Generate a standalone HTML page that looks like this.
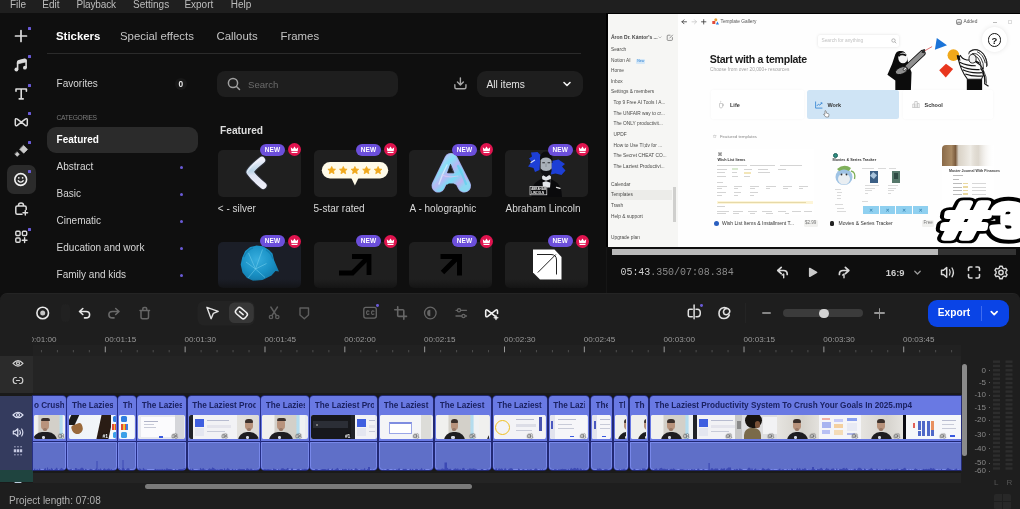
<!DOCTYPE html>
<html lang="en">
<head>
<meta charset="utf-8">
<title>Video Editor</title>
<style>
*{box-sizing:border-box;margin:0;padding:0}
html,body{width:1020px;height:509px;overflow:hidden;background:#0e0e0e}
body{position:relative;font-family:"Liberation Sans","DejaVu Sans",sans-serif;color:#ddd;font-size:11px}
#root{position:absolute;left:0;top:0;width:1020px;height:509px;will-change:transform;transform:translateZ(0)}
.abs{position:absolute}
.t{position:absolute;white-space:nowrap;line-height:1}
#menubar{left:0;top:0;width:1020px;height:13px;background:#1f1f1f}
#menubar .t{top:-.5px;font-size:10px;color:#bdbdbd}
#sidebar{left:0;top:13px;width:44px;height:280px;background:#0f0f0f}
.dot{position:absolute;width:3px;height:3px;background:#6a5bd8;border-radius:.5px}
#panel{left:44px;top:13px;width:563px;height:280px;background:#0f0f0f}
.tab{top:30.800px;font-size:11.400px;color:#c4c4c4}
.cat{font-size:10px;color:#d6d6d6;left:56.600px;transform:translateY(.45px)}
.cdot{position:absolute;left:180.200px;width:3px;height:3px;border-radius:50%;background:#6a5bd8}
.card{position:absolute;width:83px;height:47px;background:#1e1e1e;border-radius:5px}
.lbl{font-size:10px;color:#d8d8d8}
.new{position:absolute;width:25px;height:12.500px;border-radius:6.500px;background:#6c4fdb;color:#fff;font-size:6.500px;font-weight:bold;text-align:center;line-height:12.500px;letter-spacing:.1px}
.crown{position:absolute;width:13px;height:13px;border-radius:50%;background:#e0144f}
#preview{left:607px;top:13px;width:413px;height:280px;background:#0e0e0e}
#timeline{left:0;top:293px;width:1020px;height:216px;background:#1e1e1e;border-radius:7px 7px 0 0;border-top:1px solid #242424}
.rl{top:335.900px;font-size:8.100px;color:#9a9a9a}
.ml{position:absolute;right:34px;font-size:8px;color:#8a8a8a;line-height:1;white-space:nowrap}

.clip{position:absolute;top:396px;height:73.500px;background:#6979e3;border-radius:3.500px;overflow:hidden;box-shadow:0 0 0 .8px #262f8c}
.clip .ct{position:absolute;top:4.500px;font-size:8.200px;font-weight:bold;color:#1b2262;white-space:nowrap;line-height:10px;height:11px;overflow:hidden}
.clip .ths{position:absolute;left:1.200px;right:.8px;top:19px;height:24px;border-radius:2px;overflow:hidden;display:flex;background:#e8eaf0}
.th1{position:relative;height:24px;flex:none;overflow:hidden}
.clip .ln{position:absolute;left:0;right:0;top:44.500px;height:1.500px;background:#1f2674}
.clip .ab{position:absolute;left:0;right:0;top:46px;bottom:0;background:#5f6fc8;border:1px solid #7888ea;border-radius:0 0 3.500px 3.500px}
.bd{position:absolute;bottom:.5px;font-size:5px;font-weight:bold;color:#fff;line-height:6px;text-shadow:0 0 1px #000,0 0 1px #000,0 0 1.500px #000;letter-spacing:-.2px}
</style>
</head>
<body>
<div id="root">
<!-- MENUBAR -->
<div id="menubar" class="abs">
  <span class="t" style="left:10px">File</span>
  <span class="t" style="left:42.300px">Edit</span>
  <span class="t" style="left:76.500px;letter-spacing:-.15px">Playback</span>
  <span class="t" style="left:133px">Settings</span>
  <span class="t" style="left:184.400px">Export</span>
  <span class="t" style="left:230.700px">Help</span>
</div>
<!-- SIDEBAR -->
<div id="sidebar" class="abs"></div>
<div class="abs" style="left:7px;top:165px;width:28.600px;height:28.700px;border-radius:7px;background:#2b2b2b"></div>
<svg class="abs" style="left:0;top:13px" width="44" height="280" viewBox="0 13 44 280" fill="none" stroke="#dcdcdc" stroke-width="1.6" stroke-linecap="round" stroke-linejoin="round">
  <!-- plus -->
  <path d="M15.5 36h11M21 30.5v11" stroke-width="1.7"/>
  <!-- music -->
  <path d="M17.600 69.300V62.300q0-1.300 1.300-1.600l5.600-1.300q1.600-.3 1.600 1.200V67.500" stroke-width="1.600"/>
  <path d="M17.600 62.200q0-1.200 1.300-1.500l5.600-1.300q1.600-.3 1.600 1.100v1.400l-8.500 2z" fill="#dcdcdc" stroke-width=".6"/>
  <circle cx="16.400" cy="69.500" r="1.900" fill="#dcdcdc" stroke="none"/>
  <circle cx="24.900" cy="67.700" r="1.900" fill="#dcdcdc" stroke="none"/>
  <!-- T -->
  <path d="M16 91.200V89h10.400v2.200M21.200 89.200V98.700M19.200 98.900h4" stroke-width="1.600"/>
  <!-- bowtie -->
  <path d="M21.300 122.200L17.300 119.100Q15.300 117.800 15.300 120.100V124.300Q15.300 126.600 17.300 125.300L21.300 122.200L25.300 119.100Q27.300 117.800 27.300 120.100V124.300Q27.300 126.600 25.300 125.300Z" stroke-width="1.500"/>
  <!-- sparkle -->
  <path d="M23.700 145.600l3.800 3.800-3.800 3.800-3.800-3.800z" fill="#cbcbcb" stroke="#cbcbcb" stroke-width=".8"/>
  <path d="M17.200 152l2.200 2.200-2.200 2.200-2.200-2.200z" fill="#cbcbcb" stroke="#cbcbcb" stroke-width=".6"/>
  <!-- smiley -->
  <circle cx="20.700" cy="179.500" r="5.900" stroke="#f2f2f2" stroke-width="1.600"/>
  <path d="M18.200 180.800q2.500 2.800 5 0" stroke="#f2f2f2" stroke-width="1.300"/>
  <circle cx="18.800" cy="177.800" r=".85" fill="#f2f2f2" stroke="none"/>
  <circle cx="22.600" cy="177.800" r=".85" fill="#f2f2f2" stroke="none"/>
  <!-- bag plus -->
  <path d="M22 214.300H17.300q-1.500 0-1.500-1.500V207.500q0-1.500 1.500-1.500h7.400q1.500 0 1.500 1.500v2M18.500 206v-.8q0-2.200 2.500-2.200t2.500 2.200v.8" stroke-width="1.500"/>
  <path d="M25.300 210.500v4.600M23 212.800h4.600" stroke-width="1.400"/>
  <!-- grid plus -->
  <rect x="15.800" y="231.200" width="4.300" height="4.300" rx="1" stroke-width="1.400"/>
  <rect x="22.400" y="231.200" width="4.300" height="4.300" rx="1" stroke-width="1.400"/>
  <rect x="15.800" y="238" width="4.300" height="4.300" rx="1" stroke-width="1.400"/>
  <path d="M24.600 237.800v4.800M22.200 240.200h4.800" stroke-width="1.400"/>
</svg>
<div class="dot" style="left:28px;top:27px"></div>
<div class="dot" style="left:28px;top:55px"></div>
<div class="dot" style="left:28px;top:84px"></div>
<div class="dot" style="left:28px;top:112px"></div>
<div class="dot" style="left:28px;top:141px"></div>
<div class="dot" style="left:28px;top:170px"></div>
<div class="dot" style="left:28px;top:228px"></div>
<!-- PANEL -->
<div id="panel" class="abs"></div>
<div class="t tab" style="left:56px;font-weight:bold;color:#fff">Stickers</div>
<div class="t tab" style="left:120px">Special effects</div>
<div class="t tab" style="left:216.500px">Callouts</div>
<div class="t tab" style="left:280.500px">Frames</div>
<div class="abs" style="left:47px;top:53px;width:534px;height:1px;background:#2b2b2b"></div>
<!-- categories -->
<div class="t cat" style="top:79.2px">Favorites</div>
<div class="abs" style="left:175px;top:78px;width:12px;height:12px;border-radius:50%;background:#181818"></div>
<div class="t" style="left:178.600px;top:79.900px;font-size:8.300px;font-weight:bold;color:#e6e6e6">0</div>
<div class="t" style="left:56.600px;top:115.200px;font-size:6.700px;color:#7a7a7a;letter-spacing:-.32px">CATEGORIES</div>
<div class="abs" style="left:46.800px;top:126.500px;width:151.700px;height:26.500px;border-radius:9px;background:#2b2b2b"></div>
<div class="t cat" style="top:135.2px;font-weight:bold;color:#fff">Featured</div>
<div class="t cat" style="top:162.2px">Abstract</div><div class="cdot" style="top:165.500px"></div>
<div class="t cat" style="top:189.2px">Basic</div><div class="cdot" style="top:192.500px"></div>
<div class="t cat" style="top:216.2px">Cinematic</div><div class="cdot" style="top:219.500px"></div>
<div class="t cat" style="top:243.2px">Education and work</div><div class="cdot" style="top:246.500px"></div>
<div class="t cat" style="top:270.2px">Family and kids</div><div class="cdot" style="top:273.500px"></div>
<!-- search -->
<div class="abs" style="left:217px;top:71px;width:181px;height:26px;border-radius:8px;background:#1e1e1e"></div>
<svg class="abs" style="left:226px;top:76px" width="16" height="16" viewBox="0 0 16 16" fill="none" stroke="#a0a0a0" stroke-width="1.500" stroke-linecap="round"><circle cx="7" cy="7" r="4.600"/><path d="M10.500 10.500l3 3"/></svg>
<div class="t" style="left:248px;top:80.300px;font-size:9.600px;color:#6c6c6c">Search</div>
<svg class="abs" style="left:452.800px;top:76.300px" width="14.800" height="14.800" viewBox="0 0 16 16" fill="none" stroke="#a8a8a8" stroke-width="1.500" stroke-linecap="round" stroke-linejoin="round"><path d="M8 2v7.500M4.800 6.500L8 9.700l3.200-3.200M2 9.500v2.700q0 1.600 1.600 1.600h8.800q1.600 0 1.600-1.600V9.500"/></svg>
<div class="abs" style="left:477px;top:71px;width:106px;height:26px;border-radius:9px;background:#1e1e1e"></div>
<div class="t" style="left:486.400px;top:79.900px;font-size:10.200px;color:#e2e2e2">All items</div>
<svg class="abs" style="left:562px;top:80px" width="10" height="8" viewBox="0 0 10 8" fill="none" stroke="#f0f0f0" stroke-width="1.600" stroke-linecap="round" stroke-linejoin="round"><path d="M2 2.500l3 3 3-3"/></svg>
<div class="t" style="left:220px;top:125.500px;font-size:10.200px;font-weight:bold;color:#dedede">Featured</div>
<!-- cards -->
<div class="card" style="left:217.5px;top:149.5px;height:47px;background:#1f1f1f"></div>
<div class="card" style="left:313.5px;top:149.5px;height:47px;background:#1f1f1f"></div>
<div class="card" style="left:409.4px;top:149.5px;height:47px;background:#1f1f1f"></div>
<div class="card" style="left:505.3px;top:149.5px;height:47px;background:#1f1f1f"></div>
<div class="card" style="left:217.5px;top:241.7px;height:46.5px;background:#1b1e27"></div>
<div class="card" style="left:313.5px;top:241.7px;height:46.5px;background:#1f1f1f"></div>
<div class="card" style="left:409.4px;top:241.7px;height:46.5px;background:#1f1f1f"></div>
<div class="card" style="left:505.3px;top:241.7px;height:46.5px;background:#1f1f1f"></div>
<svg class="abs" style="left:240px;top:152px" width="34" height="44" viewBox="240 152 34 44" fill="none" stroke-linecap="round" stroke-linejoin="round">
<defs><linearGradient id="sg" x1="0" y1="0" x2="0" y2="1"><stop offset="0" stop-color="#eef0fb"/><stop offset=".42" stop-color="#b9d3e6"/><stop offset=".6" stop-color="#dfe4f4"/><stop offset="1" stop-color="#eceef8"/></linearGradient></defs>
<path d="M261.800 160.200Q252 168 249.800 172Q254 178 263.200 185.600" stroke="#2c2e36" stroke-width="9"/>
<path d="M261.800 160.200Q252 168 249.800 172Q254 178 263.200 185.600" stroke="url(#sg)" stroke-width="6.800"/>
<path d="M258.500 160.500Q249.500 167.500 247.300 172" stroke="#f8f8ff" stroke-width=".9" opacity=".9"/>
</svg>
<svg class="abs" style="left:318px;top:158px" width="74" height="32" viewBox="318 158 74 32">
<rect x="321.800" y="162" width="66.400" height="16.500" rx="8.200" fill="#fffbe9"/><path d="M351.300 178l3.600 7.500 3.600-7.500z" fill="#fffbe9"/><path transform="translate(331.7 170.300)" d="M0-3.800L1.150-1.300L3.800-1.050L1.800.75L2.350 3.400L0 2.050L-2.350 3.400L-1.800.75L-3.800-1.050L-1.150-1.300z" fill="#f0a81c" stroke="#f0a81c" stroke-width=".8" stroke-linejoin="round"/><path transform="translate(343.3 170.300)" d="M0-3.800L1.150-1.300L3.800-1.050L1.800.75L2.350 3.400L0 2.050L-2.350 3.400L-1.800.75L-3.800-1.050L-1.150-1.300z" fill="#f0a81c" stroke="#f0a81c" stroke-width=".8" stroke-linejoin="round"/><path transform="translate(354.9 170.300)" d="M0-3.800L1.150-1.300L3.800-1.050L1.800.75L2.350 3.400L0 2.050L-2.350 3.400L-1.800.75L-3.800-1.050L-1.150-1.300z" fill="#f0a81c" stroke="#f0a81c" stroke-width=".8" stroke-linejoin="round"/><path transform="translate(366.5 170.300)" d="M0-3.800L1.150-1.300L3.800-1.050L1.800.75L2.350 3.400L0 2.050L-2.350 3.400L-1.800.75L-3.800-1.050L-1.150-1.300z" fill="#f0a81c" stroke="#f0a81c" stroke-width=".8" stroke-linejoin="round"/><path transform="translate(378.1 170.300)" d="M0-3.800L1.150-1.300L3.800-1.050L1.800.75L2.350 3.400L0 2.050L-2.350 3.400L-1.800.75L-3.800-1.050L-1.150-1.300z" fill="#f0a81c" stroke="#f0a81c" stroke-width=".8" stroke-linejoin="round"/></svg>
<svg class="abs" style="left:428px;top:150px" width="50" height="48" viewBox="428 150 50 48" fill="none" stroke-linecap="round" stroke-linejoin="round">
<defs><linearGradient id="hg" x1="0" y1="0" x2="1" y2="1"><stop offset="0" stop-color="#c8c0f6"/><stop offset=".25" stop-color="#86e0f6"/><stop offset=".45" stop-color="#b9b6f4"/><stop offset=".65" stop-color="#78dcf4"/><stop offset=".85" stop-color="#bfb2f0"/><stop offset="1" stop-color="#8cd8f2"/></linearGradient></defs>
<path d="M438.300 185.800L451 159.700L464.300 185.800" stroke="#9fa6e6" stroke-width="13.600"/>
<path d="M438.300 185.800L451 159.700L464.300 185.800M444 178.500H458" stroke="url(#hg)" stroke-width="12.200"/>
<path d="M444 179H458" stroke="url(#hg)" stroke-width="8"/>
<path d="M450.400 164.800L447.500 172.800H453.500z" fill="#1c1c1e" stroke="#1c1c1e" stroke-width=".8"/>
<path d="M446.500 188.500L449 184.500H453.500L456 188.500" stroke="#1f1f1f" stroke-width="2.200" fill="#1f1f1f"/>
<path d="M439 184q3-9 8-19" stroke="#e6f6ff" stroke-width="1.400" opacity=".65"/>
<path d="M458 166q5 9 8 18" stroke="#5fd0ee" stroke-width="2.200" opacity=".75"/>
<path d="M442 175q6 3 16 1" stroke="#e0c8f4" stroke-width="1.200" opacity=".7"/>
</svg>
<svg class="abs" style="left:525px;top:150px" width="48" height="48" viewBox="525 150 48 48">
<path d="M531 152.500l6.500-.5 3 3-1 15-4.500 2-1.500-4-5.500-1.500 3.500-4.500-2.500-3.500 3-2z" fill="#1d3fd6"/>
<path d="M551.500 161l7-1.500 6.500 4.500-3 2.500 3.500 4-4 4.500-6-1.500-4.500 1z" fill="#1d3fd6"/>
<path d="M531 162.500l3.500-2.200" stroke="#cfd8ff" stroke-width="1.300" stroke-linecap="round"/>
<path d="M531.500 197q-.5-13 7-16.500l4.500-2.500h6l4.500 2.500q8.500 3.500 8.500 16.500z" fill="#0a0a0c"/>
<path d="M542 176.500l3.800-3h1.400l3.800 3-1 11h-7z" fill="#e4e6ea"/>
<path d="M541.300 179l4.700 1.700 4.700-1.700v3.800l-4.700-1.500-4.700 1.500z" fill="#0a0a0c"/>
<path d="M540 159q0-7.500 6.200-7.500t6.200 7.500v4h-12.400z" fill="#0c0c0e"/>
<path d="M540.600 160.500q1-3 5.400-3t5.600 3.500v7q0 4-5.500 7-5.500-3-5.500-7z" fill="#aab2ba"/>
<path d="M540.600 168.500q2 2.500 5.500 2.500t5.500-2.500v1.500q0 4-5.500 7-5.500-3-5.500-7z" fill="#111114"/>
<path d="M542.300 162.800h2.600M547.600 162.800h2.600" stroke="#2a2c30" stroke-width="1.100"/>
<path d="M546 163.500v3.500" stroke="#80888f" stroke-width=".8"/>
<rect x="530" y="186.500" width="16.800" height="8.300" fill="#101012" stroke="#e8e8e8" stroke-width=".7"/>
<text x="531.200" y="190.200" font-family="'Liberation Sans',sans-serif" font-size="2.900" font-weight="bold" fill="#f0f0f0">ABRAHAM</text>
<text x="531.200" y="193.600" font-family="'Liberation Sans',sans-serif" font-size="2.900" font-weight="bold" fill="#f0f0f0">LINCOLN</text>
<path d="M556.500 187.300l3.500 1" stroke="#e0e0e0" stroke-width="1.300" stroke-linecap="round"/>
</svg>
<svg class="abs" style="left:236px;top:243px" width="46" height="42" viewBox="236 243 46 42">
<defs><radialGradient id="cg" cx=".42" cy=".4" r=".65"><stop offset="0" stop-color="#38aede"/><stop offset=".6" stop-color="#1a92c6"/><stop offset="1" stop-color="#1279aa"/></radialGradient></defs>
<path d="M256.500 245.500l6.500.8 6 3.700 3.500 3.500 1.500 6.500 3 7 2 4.500-3.500-.5-4 4.500-9 4.500-9.500.8-6-2.700-4.500-5.500-1.800-8 1.500-7 3-6.500 5-4z" fill="url(#cg)"/>
<path d="M246 262l9.500 7 11-5.500M255.500 269l-7.500 9M255.500 269l9.500 8.500M248.500 253l7 16M262.500 249.500l-7 19.500" stroke="#7fd6f2" stroke-width=".8" fill="none" opacity=".6"/>
<path d="M244 257q3-7 9-9M266 250q5 3 7 9" stroke="#0f6e9c" stroke-width="1.200" fill="none" opacity=".55"/>
</svg>
<svg class="abs" style="left:336px;top:250px" width="40" height="30" viewBox="336 250 40 30" fill="none" stroke="#000" stroke-width="4.800" stroke-linejoin="miter">
<path d="M339 273h13.500l15.500-15.500"/><path d="M352 256.500h17v18.500"/></svg>
<svg class="abs" style="left:436px;top:250px" width="32" height="30" viewBox="436 250 32 30" fill="none" stroke="#000" stroke-width="5" stroke-linejoin="miter">
<path d="M442.500 272.500l16-16"/><path d="M440.500 256.500h19v19"/></svg>
<svg class="abs" style="left:528px;top:246px" width="38" height="38" viewBox="528 246 38 38">
<path d="M533 249.500h21.500l7 7.500v22.500h-21.500l-7-7z" fill="#fff"/>
<path d="M537.800 272.500l18-18M537 254.500h14q5.500 0 5.500 5.500v14.500" fill="none" stroke="#222" stroke-width="1"/></svg>
<div class="new" style="left:260.0px;top:143.5px">NEW</div>
<div class="crown" style="left:287.8px;top:143.3px"><svg width="13" height="13" viewBox="0 0 13 13" style="display:block"><path d="M3.300 8.300L2.800 4.300l2.100 1.700L6.500 3.500l1.600 2.500 2.100-1.700-.5 4z" fill="#fff"/><rect x="3.400" y="8.900" width="6.200" height="1.100" rx=".4" fill="#fff"/></svg></div>
<div class="new" style="left:356.0px;top:143.5px">NEW</div>
<div class="crown" style="left:383.8px;top:143.3px"><svg width="13" height="13" viewBox="0 0 13 13" style="display:block"><path d="M3.300 8.300L2.800 4.300l2.100 1.700L6.500 3.500l1.600 2.500 2.100-1.700-.5 4z" fill="#fff"/><rect x="3.400" y="8.900" width="6.200" height="1.100" rx=".4" fill="#fff"/></svg></div>
<div class="new" style="left:451.9px;top:143.5px">NEW</div>
<div class="crown" style="left:479.7px;top:143.3px"><svg width="13" height="13" viewBox="0 0 13 13" style="display:block"><path d="M3.300 8.300L2.800 4.300l2.100 1.700L6.500 3.500l1.600 2.500 2.100-1.700-.5 4z" fill="#fff"/><rect x="3.400" y="8.900" width="6.200" height="1.100" rx=".4" fill="#fff"/></svg></div>
<div class="new" style="left:547.8px;top:143.5px">NEW</div>
<div class="crown" style="left:575.6px;top:143.3px"><svg width="13" height="13" viewBox="0 0 13 13" style="display:block"><path d="M3.300 8.300L2.800 4.300l2.100 1.700L6.500 3.500l1.600 2.500 2.100-1.700-.5 4z" fill="#fff"/><rect x="3.400" y="8.900" width="6.200" height="1.100" rx=".4" fill="#fff"/></svg></div>
<div class="new" style="left:260.0px;top:234.9px">NEW</div>
<div class="crown" style="left:287.8px;top:234.7px"><svg width="13" height="13" viewBox="0 0 13 13" style="display:block"><path d="M3.300 8.300L2.800 4.300l2.100 1.700L6.500 3.500l1.600 2.500 2.100-1.700-.5 4z" fill="#fff"/><rect x="3.400" y="8.900" width="6.200" height="1.100" rx=".4" fill="#fff"/></svg></div>
<div class="new" style="left:356.0px;top:234.9px">NEW</div>
<div class="crown" style="left:383.8px;top:234.7px"><svg width="13" height="13" viewBox="0 0 13 13" style="display:block"><path d="M3.300 8.300L2.800 4.300l2.100 1.700L6.500 3.500l1.600 2.500 2.100-1.700-.5 4z" fill="#fff"/><rect x="3.400" y="8.900" width="6.200" height="1.100" rx=".4" fill="#fff"/></svg></div>
<div class="new" style="left:451.9px;top:234.9px">NEW</div>
<div class="crown" style="left:479.7px;top:234.7px"><svg width="13" height="13" viewBox="0 0 13 13" style="display:block"><path d="M3.300 8.300L2.800 4.300l2.100 1.700L6.500 3.500l1.600 2.500 2.100-1.700-.5 4z" fill="#fff"/><rect x="3.400" y="8.900" width="6.200" height="1.100" rx=".4" fill="#fff"/></svg></div>
<div class="new" style="left:547.8px;top:234.9px">NEW</div>
<div class="crown" style="left:575.6px;top:234.7px"><svg width="13" height="13" viewBox="0 0 13 13" style="display:block"><path d="M3.300 8.300L2.800 4.300l2.100 1.700L6.500 3.500l1.600 2.500 2.100-1.700-.5 4z" fill="#fff"/><rect x="3.400" y="8.900" width="6.200" height="1.100" rx=".4" fill="#fff"/></svg></div>
<div class="abs" style="left:605.500px;top:13px;width:1px;height:280px;background:#161616"></div>
<div class="abs" style="left:44px;top:279px;width:560px;height:14px;background:linear-gradient(180deg,rgba(15,15,15,0) 0%,rgba(15,15,15,.5) 50%,#0f0f0f 92%)"></div>
<div class="t lbl" style="left:217.800px;top:203.7px">&lt; - silver</div>
<div class="t lbl" style="left:313.500px;top:203.7px">5-star rated</div>
<div class="t lbl" style="left:409.500px;top:203.7px">A - holographic</div>
<div class="t lbl" style="left:505.500px;top:203.7px">Abraham Lincoln</div>

<!-- PREVIEW -->
<div id="preview" class="abs"></div>
<div class="abs" style="left:606px;top:13px;width:414px;height:234px;background:#000"></div>
<div id="video" class="abs" style="left:608px;top:14px;width:412px;height:232.500px;background:#fefefe;overflow:hidden;color:#4a4a48;font-size:4.800px">
<div class="abs" style="left:0;top:0;width:70px;height:233px;background:#f6f6f4"></div>
<div class="abs" style="left:0;top:176px;width:64px;height:10px;background:#ecece9"></div>
<div class="abs" style="left:64.5px;top:172.5px;width:3px;height:35px;background:#cfcfcd"></div>
<div class="t" style="left:3px;top:21.300px;font-size:5px;font-weight:bold;color:#444">Áron Dr. Kántor's ...</div>
<svg class="abs" style="left:49px;top:20px" width="18" height="8" viewBox="0 0 18 8" fill="none" stroke="#666" stroke-width=".7"><path d="M1.500 2.500l1.500 1.500 1.500-1.500" stroke="#aaa"/><path d="M13.500 1.200h-2.500q-.8 0-.8.800v3.600q0 .8.800.8h3.600q.8 0 .8-.8v-2.400M12.500 4.300l3.300-3.500"/></svg>
<div class="t" style="left:3px;top:33.800px">Search</div>
<div class="t" style="left:3px;top:44.5px">Notion AI</div>
<div class="t" style="left:3px;top:55.0px">Home</div>
<div class="t" style="left:3px;top:65.7px">Inbox</div>
<div class="t" style="left:3px;top:76.2px">Settings &amp; members</div>
<div class="t" style="left:5.5px;top:87.0px">Top 9 Free AI Tools I A...</div>
<div class="t" style="left:5.5px;top:97.5px">The UNFAIR way to cr...</div>
<div class="t" style="left:5.5px;top:108.2px">The ONLY productivit...</div>
<div class="t" style="left:5.5px;top:118.5px">UPDF</div>
<div class="t" style="left:5.5px;top:129.5px">How to Use Tl;dv for ...</div>
<div class="t" style="left:5.5px;top:139.8px">The Secret CHEAT CO...</div>
<div class="t" style="left:5.5px;top:150.5px">The Laziest Productivi...</div>
<div class="t" style="left:3px;top:168.9px">Calendar</div>
<div class="t" style="left:3px;top:179.4px">Templates</div>
<div class="t" style="left:3px;top:190.1px">Trash</div>
<div class="t" style="left:3px;top:200.8px">Help &amp; support</div>
<div class="t" style="left:3px;top:222.3px">Upgrade plan</div>
<div class="abs" style="left:28px;top:44.500px;width:9px;height:5px;background:#d5e8f8;border-radius:1px"></div><div class="t" style="left:29.300px;top:45.500px;font-size:3.500px;color:#2b7fd0">New</div>
<svg class="abs" style="left:72px;top:4px" width="28" height="8" viewBox="0 0 28 8" fill="none" stroke="#333" stroke-width=".8" stroke-linecap="round" stroke-linejoin="round"><path d="M6.500 3.800H2M4 1.800l-2 2 2 2"/><path d="M12 3.800h4.500M14.500 1.800l2 2-2 2" stroke="#c6c6c6"/><path d="M21.500 3.800h4.400M23.700 1.600v4.400"/></svg>
<svg class="abs" style="left:103.500px;top:4px" width="7" height="7" viewBox="0 0 7 7"><circle cx="3.800" cy="1.800" r="1.500" fill="#e8a33a"/><rect x=".3" y="3" width="3" height="3" fill="#e24a3a"/><path d="M3.800 6.500l1.600-3 1.600 3z" fill="#2d7fe0"/></svg>
<div class="t" style="left:112.500px;top:6.300px;font-size:4.800px;color:#555">Template Gallery</div>
<svg class="abs" style="left:347.500px;top:4.800px" width="6" height="6" viewBox="0 0 6 6" fill="none" stroke="#555" stroke-width=".7"><rect x=".6" y=".6" width="4.800" height="4.800" rx="1"/><path d="M1.800 5V3.200h2.400V5"/></svg>
<div class="t" style="left:355.500px;top:6.300px;font-size:4.800px;color:#555">Added</div>
<div class="abs" style="left:385px;top:8px;width:3.500px;height:.7px;background:#bbb"></div>
<div class="abs" style="left:399.500px;top:5.500px;width:4.500px;height:4.500px;border:.6px solid #ddd"></div>
<div class="abs" style="left:210px;top:20.500px;width:81px;height:12px;border-radius:2px;background:#fff;box-shadow:0 0 3px rgba(0,0,0,.13)"></div>
<div class="t" style="left:213.500px;top:25px;font-size:4.800px;color:#c2c2c2">Search for anything</div>
<svg class="abs" style="left:283px;top:23.500px" width="6" height="6" viewBox="0 0 6 6" fill="none" stroke="#999" stroke-width=".7"><circle cx="2.500" cy="2.500" r="1.700"/><path d="M3.800 3.800l1.500 1.500"/></svg>
<div class="abs" style="left:374px;top:13px;width:25px;height:25px;border-radius:50%;background:#fff;box-shadow:0 0 5px rgba(0,0,0,.10)"></div>
<div class="abs" style="left:379.700px;top:19.300px;width:13.400px;height:13.400px;border-radius:50%;border:1.600px solid #111"></div>
<div class="t" style="left:383.600px;top:21.500px;font-size:9.500px;font-weight:bold;color:#111">?</div>
<div class="t" style="left:101.800px;top:40.200px;font-size:10.600px;font-weight:bold;color:#1a1a1a;letter-spacing:-.31px">Start with a template</div>
<div class="t" style="left:102px;top:54px;font-size:4.800px;color:#a5a5a5">Choose from over 20,000+ resources</div>
<div class="abs" style="left:103px;top:76px;width:93px;height:29px;border-radius:2px;background:#fff;box-shadow:0 0 3px rgba(0,0,0,.035)"></div>
<div class="abs" style="left:198.5px;top:76px;width:92px;height:29px;border-radius:2.500px;background:#cfe4f5"></div>
<div class="abs" style="left:295px;top:76px;width:90px;height:29px;border-radius:2px;background:#fff;box-shadow:0 0 3px rgba(0,0,0,.035)"></div>
<div class="t" style="left:122px;top:88.700px;font-size:5.500px;font-weight:bold;color:#333">Life</div>
<div class="t" style="left:219.500px;top:88.700px;font-size:5.500px;font-weight:bold;color:#333">Work</div>
<div class="t" style="left:316.500px;top:88.700px;font-size:5.500px;font-weight:bold;color:#333">School</div>
<svg class="abs" style="left:109px;top:86px" width="8" height="9" viewBox="0 0 8 9" fill="none" stroke="#bbb" stroke-width=".7"><path d="M2.500 3.500h3v3q0 1.500-1.500 1.500t-1.500-1.500zM5.500 4.200h1v1.600h-1M3.500 2.500q.5-.8 0-1.600"/></svg>
<svg class="abs" style="left:206.5px;top:86.5px" width="8" height="8" viewBox="0 0 8 8" fill="none" stroke="#2b7fd0" stroke-width=".8"><path d="M.6.500v6.600h6.800M1.800 5l1.600-1.800 1.400 1 2-2.400M5.600 1.800h1.300v1.300"/></svg>
<svg class="abs" style="left:303.5px;top:86px" width="8" height="8" viewBox="0 0 8 8" fill="none" stroke="#bbb" stroke-width=".7"><path d="M.8 7.500V4h2v3.500M2.800 7.500V1.500h2.400v6M5.200 7.500V3.500h2v4M.3 7.500h7.400"/></svg>
<svg class="abs" style="left:215px;top:96px" width="7" height="8" viewBox="0 0 7 8"><path d="M2 .8q.7-.4 1 .4l.6 2 1.800.5q.8.300.6 1.100l-.5 2.200H2.800L.8 4.600q-.3-.6.300-.8l.9.600z" fill="#fff" stroke="#444" stroke-width=".5"/></svg>
<div class="t" style="left:104.5px;top:120.3px;font-size:5px;color:#777">☆</div>
<div class="t" style="left:112px;top:121px;font-size:4.300px;color:#888">Featured templates</div>
<svg class="abs" style="left:272px;top:16px" width="120" height="65" viewBox="0 0 940 509">
<path d="M445 62L525 120L430 155z" fill="#1b74d8"/>
<circle cx="575" cy="197" r="46" fill="#f0a81a"/>
<path d="M517 265L573 305L515 372L464 315z" fill="#e8361e"/>
<!-- left person -->
<path d="M150 165q50-10 62 45l10 60 25 60-5 140H120V395L58 350q40-80 62-160 8-20 30-25z" fill="#0c0c0c"/>
<ellipse cx="180" cy="218" rx="37" ry="42" fill="#f4f4f4"/>
<path d="M145 205q20-25 60-5" stroke="#0c0c0c" stroke-width="14" fill="none"/>
<path d="M215 292L332 182" stroke="#0c0c0c" stroke-width="50" stroke-linecap="round"/>
<path d="M215 292L332 182" stroke="#8f8f8f" stroke-width="36" stroke-linecap="round"/>
<ellipse cx="168" cy="318" rx="50" ry="27" transform="rotate(-22 168 318)" fill="#8f8f8f" stroke="#0c0c0c" stroke-width="7"/>
<ellipse cx="195" cy="305" rx="16" ry="9" transform="rotate(-35 195 305)" fill="#f0f0f0" stroke="#0c0c0c" stroke-width="5"/>
<path d="M325 178q5-30 25-30 10 12-5 35z" fill="#2a2a2a"/>
<path d="M352 162L408 130" stroke="#d94a4a" stroke-width="6"/>
<!-- right person -->
<path d="M680 385h120v85H680z" fill="#0c0c0c"/>
<path d="M610 215q20 100 75 170h110q40-60-15-115-50-40-100-35-40-10-50-35z" fill="#fafafa" stroke="#111" stroke-width="8"/>
<path d="M620 250q60 30 130 30M630 280q60 35 150 30M648 312q60 30 150 22M668 345q60 22 135 15M700 230q40 0 80 30" stroke="#111" stroke-width="9" fill="none"/>
<path d="M790 300q40 60 30 120l30 20" stroke="#111" stroke-width="9" fill="none"/>
<path d="M800 330q25 40 20 80M812 320q25 45 22 100" stroke="#111" stroke-width="6" fill="none"/>
<path d="M600 200q15-10 25 10l5 30-20-5z" fill="#111"/>
<ellipse cx="725" cy="225" rx="28" ry="34" fill="#f2f2f2" stroke="#111" stroke-width="7"/>
<path d="M700 175q40-40 90-5 50 40 50 110M710 165q50-30 95 15 35 45 30 110M720 185q40-10 70 35 25 40 20 85M740 200q30 10 45 50 10 30 5 60M695 190q-5-25 30-35M760 170q50 20 65 90" stroke="#222" stroke-width="7" fill="none"/>
</svg>
<div class="abs" style="left:108px;top:135px;width:98px;height:66px;background:#fff"></div>
<div class="t" style="left:109.5px;top:138px;font-size:5px;color:#333">⌘</div>
<div class="t" style="left:109.5px;top:145px;font-size:3.800px;font-weight:bold;color:#333">Wish List Items</div>
<div class="abs" style="left:109px;top:150.5px;width:30px;height:.9px;background:#d4d4d4"></div>
<div class="abs" style="left:142px;top:150.5px;width:25px;height:.9px;background:#d4d4d4"></div>
<div class="abs" style="left:172px;top:150.5px;width:22px;height:.9px;background:#d4d4d4"></div>
<div class="abs" style="left:109px;top:154.5px;width:10px;height:.9px;background:#d4d4d4"></div>
<div class="abs" style="left:124px;top:154.5px;width:6px;height:.9px;background:#d4d4d4"></div>
<div class="abs" style="left:136px;top:154.5px;width:8px;height:.9px;background:#d4d4d4"></div>
<div class="abs" style="left:150px;top:154.5px;width:10px;height:.9px;background:#d4d4d4"></div>
<div class="abs" style="left:170px;top:154.5px;width:8px;height:.9px;background:#d4d4d4"></div>
<div class="abs" style="left:109px;top:158px;width:8px;height:.9px;background:#d4d4d4"></div>
<div class="abs" style="left:124px;top:158px;width:5px;height:.9px;background:#d4d4d4"></div>
<div class="abs" style="left:136px;top:158px;width:7px;height:.9px;background:#d4d4d4"></div>
<div class="abs" style="left:150px;top:158px;width:12px;height:.9px;background:#d4d4d4"></div>
<div class="abs" style="left:109px;top:161.5px;width:9px;height:.9px;background:#d4d4d4"></div>
<div class="abs" style="left:124px;top:161.5px;width:6px;height:.9px;background:#d4d4d4"></div>
<div class="abs" style="left:136px;top:161.5px;width:6px;height:.9px;background:#d4d4d4"></div>
<div class="abs" style="left:109px;top:167.5px;width:6px;height:.9px;background:#d4d4d4"></div>
<div class="abs" style="left:109px;top:171.5px;width:10px;height:.9px;background:#d4d4d4"></div>
<div class="abs" style="left:126px;top:171.5px;width:8px;height:.9px;background:#d4d4d4"></div>
<div class="abs" style="left:142px;top:171.5px;width:9px;height:.9px;background:#d4d4d4"></div>
<div class="abs" style="left:158px;top:171.5px;width:10px;height:.9px;background:#d4d4d4"></div>
<div class="abs" style="left:175px;top:171.5px;width:9px;height:.9px;background:#d4d4d4"></div>
<div class="abs" style="left:191px;top:171.5px;width:9px;height:.9px;background:#d4d4d4"></div>
<div class="abs" style="left:109px;top:173.5px;width:5px;height:.9px;background:#d4d4d4"></div>
<div class="abs" style="left:126px;top:173.5px;width:4px;height:.9px;background:#d4d4d4"></div>
<div class="abs" style="left:142px;top:173.5px;width:5px;height:.9px;background:#d4d4d4"></div>
<div class="abs" style="left:158px;top:173.5px;width:4px;height:.9px;background:#d4d4d4"></div>
<div class="abs" style="left:175px;top:173.5px;width:5px;height:.9px;background:#d4d4d4"></div>
<div class="abs" style="left:191px;top:173.5px;width:4px;height:.9px;background:#d4d4d4"></div>
<div class="abs" style="left:109px;top:178px;width:9px;height:.9px;background:#d4d4d4"></div>
<div class="abs" style="left:126px;top:178px;width:7px;height:.9px;background:#d4d4d4"></div>
<div class="abs" style="left:142px;top:178px;width:8px;height:.9px;background:#d4d4d4"></div>
<div class="abs" style="left:109px;top:180.5px;width:5px;height:.9px;background:#d4d4d4"></div>
<div class="abs" style="left:126px;top:180.5px;width:4px;height:.9px;background:#d4d4d4"></div>
<div class="abs" style="left:142px;top:180.5px;width:4px;height:.9px;background:#d4d4d4"></div>
<div class="abs" style="left:109px;top:192px;width:8px;height:.9px;background:#d4d4d4"></div>
<div class="abs" style="left:109px;top:196.5px;width:12px;height:.9px;background:#d4d4d4"></div>
<div class="abs" style="left:125px;top:196.5px;width:10px;height:.9px;background:#d4d4d4"></div>
<div class="abs" style="left:140px;top:196.5px;width:9px;height:.9px;background:#d4d4d4"></div>
<div class="abs" style="left:154px;top:196.5px;width:10px;height:.9px;background:#d4d4d4"></div>
<div class="abs" style="left:170px;top:196.5px;width:8px;height:.9px;background:#d4d4d4"></div>
<div class="abs" style="left:184px;top:196.5px;width:9px;height:.9px;background:#d4d4d4"></div>
<div class="abs" style="left:196px;top:196.5px;width:8px;height:.9px;background:#d4d4d4"></div>
<div class="abs" style="left:109px;top:199px;width:9px;height:.9px;background:#d4d4d4"></div>
<div class="abs" style="left:125px;top:199px;width:6px;height:.9px;background:#d4d4d4"></div>
<div class="abs" style="left:142px;top:199px;width:5px;height:.9px;background:#d4d4d4"></div>
<div class="abs" style="left:158px;top:199px;width:7px;height:.9px;background:#d4d4d4"></div>
<div class="abs" style="left:177px;top:199px;width:4px;height:.9px;background:#d4d4d4"></div>
<div class="abs" style="left:124px;top:154px;width:6px;height:2px;background:#d9ead0"></div>
<div class="abs" style="left:136px;top:157.5px;width:7px;height:2px;background:#f3e6b8"></div>
<div class="abs" style="left:108.5px;top:186.5px;width:96px;height:3.500px;background:#fdf5d8"></div>
<div class="abs" style="left:110px;top:188px;width:88px;height:.8px;background:#e6d9a8"></div>
<div class="abs" style="left:224.5px;top:138.5px;width:5px;height:5px;border-radius:50%;background:#2e8f83;border:1px solid #1d5f57"></div>
<div class="t" style="left:224.5px;top:145px;font-size:3.800px;font-weight:bold;color:#333">Movies &amp; Series Tracker</div>
<svg class="abs" style="left:224px;top:149px" width="26" height="24" viewBox="0 0 26 24">
<ellipse cx="12" cy="14" rx="8.500" ry="8" fill="#9fc3e4"/><ellipse cx="12" cy="16" rx="6" ry="5.500" fill="#e9eef2"/>
<path d="M5 6q7-6 14-1l-2 3q-5-3-10 0z" fill="#7fb05a"/><path d="M19 8q5 1 3.500 8" fill="none" stroke="#7fb05a" stroke-width="1.300"/>
<circle cx="9.500" cy="11.500" r=".9" fill="#333"/><circle cx="14.500" cy="11.500" r=".9" fill="#333"/></svg>
<div class="abs" style="left:261.5px;top:157px;width:8px;height:12px;background:#3b5f85"></div>
<div class="abs" style="left:263px;top:159px;width:5px;height:5px;background:#a9c4dc;transform:rotate(40deg)"></div>
<div class="abs" style="left:284px;top:157px;width:8px;height:12px;background:#55776a"></div>
<div class="abs" style="left:286px;top:159px;width:4px;height:6px;background:#2f4a44"></div>
<div class="abs" style="left:254px;top:154px;width:12px;height:.9px;background:#dadada"></div>
<div class="abs" style="left:270px;top:154px;width:8px;height:.9px;background:#dadada"></div>
<div class="abs" style="left:281px;top:154px;width:7px;height:.9px;background:#dadada"></div>
<div class="abs" style="left:257px;top:171px;width:14px;height:.9px;background:#dadada"></div>
<div class="abs" style="left:280px;top:171px;width:10px;height:.9px;background:#dadada"></div>
<div class="abs" style="left:257px;top:173.5px;width:10px;height:.9px;background:#dadada"></div>
<div class="abs" style="left:280px;top:173.5px;width:8px;height:.9px;background:#dadada"></div>
<div class="abs" style="left:257px;top:176px;width:7px;height:.9px;background:#dadada"></div>
<div class="abs" style="left:280px;top:176px;width:6px;height:.9px;background:#dadada"></div>
<div class="abs" style="left:257px;top:178.5px;width:3px;height:.9px;background:#dadada"></div>
<div class="abs" style="left:280px;top:178.5px;width:3px;height:.9px;background:#dadada"></div>
<div class="abs" style="left:227px;top:175px;width:6px;height:.9px;background:#dadada"></div>
<div class="abs" style="left:229px;top:178px;width:5px;height:.9px;background:#dadada"></div>
<div class="abs" style="left:229px;top:181px;width:4px;height:.9px;background:#dadada"></div>
<div class="abs" style="left:229px;top:183.5px;width:4px;height:.9px;background:#dadada"></div>
<div class="abs" style="left:254px;top:187px;width:6px;height:.9px;background:#dadada"></div>
<div class="abs" style="left:227px;top:190px;width:8px;height:.9px;background:#dadada"></div>
<div class="abs" style="left:229px;top:194px;width:7px;height:.9px;background:#dadada"></div>
<div class="abs" style="left:229px;top:197px;width:9px;height:.9px;background:#dadada"></div>
<div class="abs" style="left:255.3px;top:192px;width:15.500px;height:8px;background:#8fd0f0"></div>
<div class="t" style="left:261.0px;top:193.5px;font-size:5px;color:#2a78a8">✕</div>
<div class="abs" style="left:271.8px;top:192px;width:15.500px;height:8px;background:#8fd0f0"></div>
<div class="t" style="left:277.5px;top:193.5px;font-size:5px;color:#2a78a8">✕</div>
<div class="abs" style="left:288.3px;top:192px;width:15.500px;height:8px;background:#8fd0f0"></div>
<div class="t" style="left:294.0px;top:193.5px;font-size:5px;color:#2a78a8">✕</div>
<div class="abs" style="left:304.8px;top:192px;width:15.500px;height:8px;background:#8fd0f0"></div>
<div class="t" style="left:310.5px;top:193.5px;font-size:5px;color:#2a78a8">✕</div>
<div class="abs" style="left:334px;top:130.5px;width:52px;height:76px;background:#fff;border-radius:4px 0 0 0;overflow:hidden"><div class="abs" style="left:0;top:0;width:52px;height:21px;background:linear-gradient(90deg,#8a6a48 0%,#a98a64 18%,#7b5c3e 26%,#d9d2c6 32%,#efece6 55%,#cfc7ba 70%,#e9e5de 85%,#fff 100%)"></div><div class="abs" style="left:30px;top:0;width:22px;height:76px;background:linear-gradient(90deg,rgba(255,255,255,0),#fff)"></div></div>
<div class="t" style="left:341px;top:155.5px;font-size:3.600px;font-weight:bold;color:#444">Master Journal With Finances</div>
<div class="abs" style="left:345px;top:161px;width:10px;height:.9px;background:#bbb"></div>
<div class="abs" style="left:345px;top:165px;width:6px;height:.9px;background:#bbb"></div>
<div class="abs" style="left:345px;top:169px;width:9px;height:.9px;background:#bbb"></div>
<div class="abs" style="left:355px;top:168.5px;width:5px;height:1.800px;background:#ead9a0"></div>
<div class="abs" style="left:364px;top:169px;width:14px;height:.9px;background:#d8d8d8"></div>
<div class="abs" style="left:345px;top:172.5px;width:9px;height:.9px;background:#bbb"></div>
<div class="abs" style="left:355px;top:172.0px;width:5px;height:1.800px;background:#ead9a0"></div>
<div class="abs" style="left:364px;top:172.5px;width:14px;height:.9px;background:#d8d8d8"></div>
<div class="abs" style="left:345px;top:176px;width:9px;height:.9px;background:#bbb"></div>
<div class="abs" style="left:355px;top:175.5px;width:5px;height:1.800px;background:#ead9a0"></div>
<div class="abs" style="left:364px;top:176px;width:14px;height:.9px;background:#d8d8d8"></div>
<div class="abs" style="left:345px;top:179.5px;width:9px;height:.9px;background:#bbb"></div>
<div class="abs" style="left:355px;top:179.0px;width:5px;height:1.800px;background:#ead9a0"></div>
<div class="abs" style="left:364px;top:179.5px;width:14px;height:.9px;background:#d8d8d8"></div>
<div class="abs" style="left:105.5px;top:206.5px;width:5px;height:5px;border-radius:50%;background:#2a5fc0"></div>
<div class="t" style="left:114px;top:207px;font-size:5px;color:#333">Wish List Items &amp; Installment T...</div>
<div class="abs" style="left:195.5px;top:205.5px;width:14px;height:7.500px;border-radius:1.500px;background:#f1f1ef"></div><div class="t" style="left:197px;top:207.3px;font-size:4.500px;color:#777">$2.99</div>
<div class="abs" style="left:221.5px;top:206.5px;width:4px;height:5.500px;border-radius:1.500px;background:#222"></div>
<div class="t" style="left:230.5px;top:207px;font-size:5px;color:#333">Movies &amp; Series Tracker</div>
<div class="abs" style="left:313.5px;top:205.5px;width:12.500px;height:7.500px;border-radius:1.500px;background:#f1f1ef"></div><div class="t" style="left:315.5px;top:207.3px;font-size:4.500px;color:#777">Free</div>
<svg class="abs" style="left:317px;top:171px;overflow:visible" width="100" height="65" viewBox="925 185 100 65">
<g font-family="'Liberation Sans','DejaVu Sans',sans-serif" font-weight="bold" stroke-linejoin="round">
<g transform="translate(991.500 237) scale(1.280 1)"><text x="0" y="0" font-size="48.500" fill="#000" stroke="#000" stroke-width="15.500" vector-effect="non-scaling-stroke">3</text></g>
<g transform="translate(941 238) skewX(-10) scale(1.540 1)"><text x="0" y="0" font-size="51.500" fill="#000" stroke="#000" stroke-width="14" vector-effect="non-scaling-stroke">#</text></g>
<g transform="translate(991.500 237) scale(1.280 1)"><text x="0" y="0" font-size="48.500" fill="#fff" stroke="#fff" stroke-width="6.500" vector-effect="non-scaling-stroke">3</text></g>
<g transform="translate(941 238) skewX(-10) scale(1.540 1)"><text x="0" y="0" font-size="51.500" fill="#fff" stroke="#fff" stroke-width="7" vector-effect="non-scaling-stroke">#</text></g>
</g></svg>
</div>
<!-- TIMELINE -->
<div class="abs" style="left:612px;top:249px;width:404px;height:6px;background:#333"></div>
<div class="abs" style="left:612px;top:249px;width:326px;height:6px;background:#b9b9b9"></div>
<div class="t" style="left:620.500px;top:267.500px;font-family:'Liberation Mono','DejaVu Sans Mono',monospace;font-size:10px;color:#8a8a8a;letter-spacing:-.05px"><span style="color:#cfcfcf">05:43</span>.350/07:08.384</div>
<svg class="abs" style="left:770px;top:260px" width="250" height="26" viewBox="770 260 250 26" fill="none" stroke="#d8d8d8" stroke-width="1.500" stroke-linecap="round" stroke-linejoin="round">
<!-- step back -->
<path d="M781.200 267.400l-3.400 3.100 3.400 3.100M778.200 270.500h5.300q3.700 0 3.700 3.400v.5" stroke-width="1.700"/>
<path d="M782.300 275l1.400-.9v3.700" stroke-width="1.400"/>
<!-- play -->
<path d="M809.700 268.500v7.800l6.900-3.900z" fill="#cacaca" stroke="#cacaca" stroke-width="1.600"/>
<!-- step fwd -->
<path d="M845.400 267.400l3.400 3.100-3.400 3.100M848.400 270.500h-5.300q-3.700 0-3.700 3.400v.5" stroke-width="1.700"/>
<path d="M842.600 275l1.400-.9v3.700" stroke-width="1.400"/>
<!-- chevron -->
<path d="M914.800 271.300l2.700 2.700 2.700-2.700" stroke="#9a9a9a" stroke-width="1.300"/>
<!-- volume -->
<path d="M941.500 270.300h2l3.200-2.800v9.800l-3.200-2.800h-2z"/>
<path d="M949.500 269.800q1.500 2.600 0 5.200M952 268q2.800 4.400 0 8.800" stroke-width="1.300"/>
<!-- fullscreen -->
<path d="M968.500 270.500v-2q0-1.500 1.500-1.500h2M976 267h2q1.500 0 1.500 1.500v2M979.500 274.500v2q0 1.500-1.500 1.500h-2M972 278h-2q-1.500 0-1.500-1.500v-2" stroke-width="1.600"/>
<!-- gear -->
<circle cx="1001" cy="272.500" r="2.200" stroke-width="1.400"/>
<path d="M999.800 266.300h2.400l.5 1.700 1.500.8 1.700-.5 1.200 2-1.200 1.300v1.800l1.200 1.300-1.200 2-1.700-.5-1.500.8-.5 1.700h-2.400l-.5-1.700-1.500-.8-1.700.5-1.200-2 1.200-1.300v-1.800l-1.200-1.300 1.200-2 1.700.5 1.500-.8z" stroke-width="1.400"/>
</svg>
<div class="t" style="left:885.800px;top:267.700px;font-size:9.400px;font-weight:bold;color:#cfcfcf">16:9</div>
<div id="timeline" class="abs"></div>
<svg class="abs" style="left:0;top:300px" width="760" height="28" viewBox="0 300 760 28" fill="none" stroke="#dadada" stroke-width="1.500" stroke-linecap="round" stroke-linejoin="round">
<!-- record -->
<circle cx="42.700" cy="313" r="5.800" stroke="#e8e8e8" stroke-width="1.600"/><circle cx="42.700" cy="313" r="2.500" fill="#c4c4c4" stroke="none"/>
<!-- undo -->
<path d="M82.800 308.500l-3.300 3 3.300 3M80 311.500h6q3.600 0 3.600 3.200t-3.600 3.200h-1.500" stroke="#e6e6e6" stroke-width="1.600"/>
<!-- redo -->
<path d="M115.700 308.500l3.300 3-3.300 3M118.500 311.500h-6q-3.600 0-3.600 3.200t3.600 3.200h1.500" stroke="#6a6a6a" stroke-width="1.600"/>
<!-- trash -->
<path d="M140 310.500h9.500M141 310.500v6.800q0 1.500 1.500 1.500h4.500q1.500 0 1.500-1.500v-6.800M142.800 310.300v-1.500q0-1.300 1.300-1.300h1.300q1.300 0 1.300 1.300v1.500" stroke="#666" stroke-width="1.500"/>
<!-- select bg -->
<rect x="197.500" y="301" width="57.300" height="24.500" rx="6.500" fill="#232323" stroke="none"/>
<rect x="61" y="304" width="9" height="18" rx="4" fill="#212121" stroke="none"/>
<rect x="229" y="302.600" width="24.800" height="20.400" rx="5.500" fill="#373737" stroke="none"/>
<!-- pointer -->
<path d="M206.900 307.300l11.300 4-4.900 2.100-2.200 5.300z" stroke="#e2e2e2" stroke-width="1.400"/>
<!-- magnet/eraser -->
<rect x="235.400" y="309.400" width="12" height="7.400" rx="2.600" transform="rotate(40 241.400 313.100)" stroke="#f0f0f0" stroke-width="1.500"/>
<path d="M239.600 311.600l3.600 3" stroke="#f0f0f0" stroke-width="1.500"/>
<!-- scissors -->
<path d="M270.800 307l5.500 8.500M277.500 307l-5.500 8.500" stroke="#5e5e5e" stroke-width="1.400"/>
<circle cx="271" cy="317" r="1.700" stroke="#5e5e5e" stroke-width="1.300"/><circle cx="277.300" cy="317" r="1.700" stroke="#5e5e5e" stroke-width="1.300"/>
<!-- marker -->
<path d="M300 308h8.500v7l-4.200 3.800-4.300-3.800z" stroke="#5e5e5e" stroke-width="1.400"/>
<!-- CC -->
<rect x="363.800" y="307.300" width="12.500" height="10.800" rx="2" stroke="#666" stroke-width="1.300"/>
<path d="M369 311.300q-2.400-1.200-2.400 1.400t2.400 1.400M374 311.300q-2.400-1.200-2.400 1.400t2.400 1.400" stroke="#666" stroke-width="1.100"/>
<!-- crop -->
<path d="M397.700 306.800v8.600q0 1 1 1h7.800M394.800 309.700h8q1 0 1 1v8.500" stroke="#666" stroke-width="1.600"/>
<!-- color -->
<circle cx="430.300" cy="313" r="5.800" stroke="#666" stroke-width="1.300"/><path d="M430.300 309.800a3.200 3.200 0 0 0 0 6.400z" fill="#666" stroke="none"/>
<!-- sliders -->
<path d="M456 310.300h10.500M456 316h10.500" stroke="#666" stroke-width="1.300"/><circle cx="459" cy="310.300" r="1.600" fill="#1e1e1e" stroke="#666" stroke-width="1.200"/><circle cx="463.500" cy="316" r="1.600" fill="#1e1e1e" stroke="#666" stroke-width="1.200"/>
<!-- transition wizard -->
<path d="M495 316.200L491.600 313.300L487.700 310.300Q485.700 309 485.700 311.300V315.300Q485.700 317.600 487.700 316.300L491.600 313.300L495.500 310.300Q497.500 309 497.500 311.300V313.500" stroke="#f0f0f0" stroke-width="1.600"/>
<path d="M496 315.300l.7 1.700 1.700.7-1.700.7-.7 1.700-.7-1.700-1.700-.7 1.700-.7z" fill="#f0f0f0" stroke="#f0f0f0" stroke-width=".5"/>
<!-- right: audio detach -->
<path d="M692.300 309.200h-2.500q-1.500 0-1.500 1.500v4.600q0 1.500 1.500 1.500h2.500M694.100 305v13.800M696 309.200h1.300q3 0 3 3.800t-3 3.800h-1.300" stroke="#e0e0e0" stroke-width="1.500"/>
<!-- clip -->
<path d="M726.500 308.300q-1.500-.9-3.200-.6-4.300.9-4.300 5.800 0 5 5 5 3.900 0 5.300-3.600" stroke="#e0e0e0" stroke-width="1.600"/>
<path d="M724 313.800q-1.500-2.800 1-4.800 2.500-1.500 4.300.7 1.400 2.500-1 4.300-2.300 1.400-4.300-.2z" stroke="#e0e0e0" stroke-width="1.500"/>
</svg>
<div class="dot" style="left:376px;top:304.300px;width:2.800px;height:2.800px;border-radius:50%"></div>
<div class="dot" style="left:700px;top:304.400px;width:2.800px;height:2.800px;border-radius:50%"></div>
<div class="abs" style="left:744.500px;top:303px;width:1px;height:20px;background:#242424"></div>
<div class="abs" style="left:761.500px;top:312.400px;width:9.500px;height:1.800px;border-radius:1px;background:#858585"></div>
<div class="abs" style="left:782.700px;top:309.300px;width:80px;height:8px;border-radius:4px;background:#3b3b3b"></div>
<div class="abs" style="left:819.300px;top:308.600px;width:9.400px;height:9.400px;border-radius:50%;background:#d2d2d2"></div>
<div class="abs" style="left:874px;top:312.400px;width:11px;height:1.700px;border-radius:1px;background:#959595"></div><div class="abs" style="left:878.650px;top:307.800px;width:1.700px;height:11px;border-radius:1px;background:#959595"></div>
<div class="abs" style="left:928px;top:299.500px;width:81px;height:27px;border-radius:9px;background:#0a44e6"></div>
<div class="t" style="left:937.800px;top:308px;font-size:10.200px;font-weight:bold;color:#fff">Export</div>
<div class="abs" style="left:981px;top:305.500px;width:1px;height:15px;background:#3f6cf0"></div>
<svg class="abs" style="left:989px;top:309px" width="10" height="8" viewBox="0 0 10 8" fill="none" stroke="#fff" stroke-width="1.700" stroke-linecap="round" stroke-linejoin="round"><path d="M2.300 2.700l2.900 2.900 2.900-2.900"/></svg>
<div class="t rl" style="left:24.9px">00:01:00</div>
<div class="t rl" style="left:104.7px">00:01:15</div>
<div class="t rl" style="left:184.5px">00:01:30</div>
<div class="t rl" style="left:264.4px">00:01:45</div>
<div class="t rl" style="left:344.2px">00:02:00</div>
<div class="t rl" style="left:424.1px">00:02:15</div>
<div class="t rl" style="left:503.9px">00:02:30</div>
<div class="t rl" style="left:583.7px">00:02:45</div>
<div class="t rl" style="left:663.6px">00:03:00</div>
<div class="t rl" style="left:743.4px">00:03:15</div>
<div class="t rl" style="left:823.3px">00:03:30</div>
<div class="t rl" style="left:903.1px">00:03:45</div>
<div class="abs" style="left:32.500px;top:344.500px;width:928.500px;height:11.500px;background:#212121"></div>
<svg class="abs" style="left:0;top:340px" width="961" height="16" viewBox="0 340 961 16"><rect x="24.96" y="346.500" width="1" height="5.800" fill="#9a9a9a"/><rect x="40.93" y="350" width="1" height="2.300" fill="#4e4e4e"/><rect x="56.90" y="350" width="1" height="2.300" fill="#4e4e4e"/><rect x="72.86" y="350" width="1" height="2.300" fill="#4e4e4e"/><rect x="88.83" y="350" width="1" height="2.300" fill="#4e4e4e"/><rect x="104.80" y="346.500" width="1" height="5.800" fill="#9a9a9a"/><rect x="120.77" y="350" width="1" height="2.300" fill="#4e4e4e"/><rect x="136.74" y="350" width="1" height="2.300" fill="#4e4e4e"/><rect x="152.70" y="350" width="1" height="2.300" fill="#4e4e4e"/><rect x="168.67" y="350" width="1" height="2.300" fill="#4e4e4e"/><rect x="184.64" y="346.500" width="1" height="5.800" fill="#9a9a9a"/><rect x="200.61" y="350" width="1" height="2.300" fill="#4e4e4e"/><rect x="216.58" y="350" width="1" height="2.300" fill="#4e4e4e"/><rect x="232.54" y="350" width="1" height="2.300" fill="#4e4e4e"/><rect x="248.51" y="350" width="1" height="2.300" fill="#4e4e4e"/><rect x="264.48" y="346.500" width="1" height="5.800" fill="#9a9a9a"/><rect x="280.45" y="350" width="1" height="2.300" fill="#4e4e4e"/><rect x="296.42" y="350" width="1" height="2.300" fill="#4e4e4e"/><rect x="312.38" y="350" width="1" height="2.300" fill="#4e4e4e"/><rect x="328.35" y="350" width="1" height="2.300" fill="#4e4e4e"/><rect x="344.32" y="346.500" width="1" height="5.800" fill="#9a9a9a"/><rect x="360.29" y="350" width="1" height="2.300" fill="#4e4e4e"/><rect x="376.26" y="350" width="1" height="2.300" fill="#4e4e4e"/><rect x="392.22" y="350" width="1" height="2.300" fill="#4e4e4e"/><rect x="408.19" y="350" width="1" height="2.300" fill="#4e4e4e"/><rect x="424.16" y="346.500" width="1" height="5.800" fill="#9a9a9a"/><rect x="440.13" y="350" width="1" height="2.300" fill="#4e4e4e"/><rect x="456.10" y="350" width="1" height="2.300" fill="#4e4e4e"/><rect x="472.06" y="350" width="1" height="2.300" fill="#4e4e4e"/><rect x="488.03" y="350" width="1" height="2.300" fill="#4e4e4e"/><rect x="504.00" y="346.500" width="1" height="5.800" fill="#9a9a9a"/><rect x="519.97" y="350" width="1" height="2.300" fill="#4e4e4e"/><rect x="535.94" y="350" width="1" height="2.300" fill="#4e4e4e"/><rect x="551.90" y="350" width="1" height="2.300" fill="#4e4e4e"/><rect x="567.87" y="350" width="1" height="2.300" fill="#4e4e4e"/><rect x="583.84" y="346.500" width="1" height="5.800" fill="#9a9a9a"/><rect x="599.81" y="350" width="1" height="2.300" fill="#4e4e4e"/><rect x="615.78" y="350" width="1" height="2.300" fill="#4e4e4e"/><rect x="631.74" y="350" width="1" height="2.300" fill="#4e4e4e"/><rect x="647.71" y="350" width="1" height="2.300" fill="#4e4e4e"/><rect x="663.68" y="346.500" width="1" height="5.800" fill="#9a9a9a"/><rect x="679.65" y="350" width="1" height="2.300" fill="#4e4e4e"/><rect x="695.62" y="350" width="1" height="2.300" fill="#4e4e4e"/><rect x="711.58" y="350" width="1" height="2.300" fill="#4e4e4e"/><rect x="727.55" y="350" width="1" height="2.300" fill="#4e4e4e"/><rect x="743.52" y="346.500" width="1" height="5.800" fill="#9a9a9a"/><rect x="759.49" y="350" width="1" height="2.300" fill="#4e4e4e"/><rect x="775.46" y="350" width="1" height="2.300" fill="#4e4e4e"/><rect x="791.42" y="350" width="1" height="2.300" fill="#4e4e4e"/><rect x="807.39" y="350" width="1" height="2.300" fill="#4e4e4e"/><rect x="823.36" y="346.500" width="1" height="5.800" fill="#9a9a9a"/><rect x="839.33" y="350" width="1" height="2.300" fill="#4e4e4e"/><rect x="855.30" y="350" width="1" height="2.300" fill="#4e4e4e"/><rect x="871.26" y="350" width="1" height="2.300" fill="#4e4e4e"/><rect x="887.23" y="350" width="1" height="2.300" fill="#4e4e4e"/><rect x="903.20" y="346.500" width="1" height="5.800" fill="#9a9a9a"/><rect x="919.17" y="350" width="1" height="2.300" fill="#4e4e4e"/><rect x="935.14" y="350" width="1" height="2.300" fill="#4e4e4e"/><rect x="951.10" y="350" width="1" height="2.300" fill="#4e4e4e"/><rect x="967.07" y="350" width="1" height="2.300" fill="#4e4e4e"/></svg>
<div class="abs" style="left:0;top:330px;width:32px;height:26px;background:#1e1e1e"></div>
<div class="abs" style="left:0;top:356px;width:961px;height:127px;background:#1a1a1a"></div>
<div class="abs" style="left:32.500px;top:356px;width:928.500px;height:37px;background:#242424"></div>
<div class="abs" style="left:0;top:356px;width:32.500px;height:37px;background:#2b2b2b"></div>
<div class="abs" style="left:32.500px;top:396px;width:928.500px;height:74px;background:#17171d"></div>
<div class="abs" style="left:0;top:396px;width:32.500px;height:74px;background:#343b5e"></div>
<div class="abs" style="left:32.500px;top:473px;width:928.500px;height:10px;background:#242424"></div>
<div class="abs" style="left:0;top:470px;width:32.500px;height:12px;background:#1f443f"></div>
<!-- CLIPS -->
<div class="clip" style="left:32.5px;width:33.5px;border-radius:0 3.500px 3.500px 0"><div class="ct" style="left:1.4px;width:30.5px">o Crush</div><div class="ths"><div class="th1" style="width:31.5px"><div style="position:absolute;left:-8px;top:0;width:42.700px;height:24px;background:linear-gradient(90deg,#f0f0ee 0 27%,#d3d0c9 31% 78%,#b4dcee 82% 86%,#eff1f3 89% 100%)"><div style="position:absolute;left:7.5px;top:16.500px;width:24px;height:12px;border-radius:9px 9px 0 0;background:#1e1d20"></div><div style="position:absolute;left:15.3px;top:3.5px;width:8.4px;height:11.5px;border-radius:4.2px;background:#b8937c"></div><div style="position:absolute;left:15.100000000000001px;top:2.7px;width:8.8px;height:3.800px;border-radius:3.500px 3.500px 1px 1px;background:#3a2f2a"></div><div style="position:absolute;left:17.5px;top:12.5px;width:4px;height:3px;border-radius:1.500px;background:#9a7a68"></div><div style="position:absolute;left:16.3px;top:20.500px;width:3.400px;height:3.500px;border-radius:1.200px;background:#d4d8e0"></div></div></div><div class="bd" style="left:25px">#1</div></div><div class="ln"></div><div class="ab" style="border-left:0;border-radius:0 0 3.500px 0"></div><svg style="position:absolute;left:0;bottom:0" width="33.5" height="28" viewBox="0 0 33.5 28" fill="#3c49b4"><path d="M0 28L1.0 27.2L2.0 26.2L2.8 28.0L3.6 27.2L4.4 27.0L5.4 28.0L6.2 26.2L7.9 28.0L8.9 28.0L10.6 28.0L11.4 27.0L12.2 25.8L13.9 28.0L14.9 28.0L15.9 26.7L17.6 27.4L18.4 25.8L19.7 27.0L20.7 28.0L21.7 27.2L22.5 27.0L23.3 25.8L24.1 25.8L25.1 28.0L26.8 27.2L28.5 25.8L30.2 27.2L31.5 27.0L32.5 27.0L33.3 25.8L33.5 28z"/><rect x="14" y="25.5" width="1" height="2.5"/></svg></div>
<div class="clip" style="left:67.4px;width:49.6px;border-radius:3.500px"><div class="ct" style="left:4.5px;width:41.6px">The Laziest Productivity System To Crush Your Goals In 2025.mp4</div><div class="ths"><div class="th1" style="width:42px;background:linear-gradient(90deg,#eef3f8,#f4f7fa)"><div style="position:absolute;left:0;top:0;width:8px;height:10px;background:#1a1a1a;transform:skewX(-25deg)"></div><div style="position:absolute;left:3px;top:9px;width:11px;height:10px;border-radius:3px 3px 6px 6px;background:#9a6a3c;transform:rotate(-20deg)"></div><div style="position:absolute;left:30px;top:0;width:12px;height:24px;background:#2a1c14;transform:skewX(-12deg)"></div></div><div class="th1" style="width:7px;background:#f4f8fc"><div style="position:absolute;left:2px;top:1px;width:6px;height:6px;border-radius:1.500px;background:#2f7fe0"></div><div style="position:absolute;left:1.500px;top:9px;width:7px;height:6px;background:linear-gradient(90deg,#e04a3a 0 30%,#f0c030 30% 50%,#e04a3a 50% 70%,#3a7fe0 70%)"></div><div style="position:absolute;left:2px;top:17px;width:6px;height:6px;border-radius:1.500px;background:#3a9fe8"></div></div><div class="bd" style="left:34px">#1</div></div><div class="ln"></div><div class="ab"></div><svg style="position:absolute;left:0;bottom:0" width="49.6" height="28" viewBox="0 0 49.6 28" fill="#3c49b4"><path d="M0 28L1.0 27.0L2.7 27.2L4.4 26.7L5.2 28.0L6.9 27.4L8.2 27.4L9.9 26.2L10.7 27.5L11.5 27.0L12.8 27.2L14.1 25.8L15.8 25.8L17.5 28.0L18.3 26.7L20.0 27.5L20.8 28.0L22.1 27.5L23.8 26.7L25.5 27.5L26.8 28.0L28.5 27.2L29.5 25.8L30.3 28.0L31.1 27.0L32.4 27.4L33.4 26.2L35.1 28.0L35.9 27.4L37.6 26.2L38.9 27.4L40.6 27.0L41.9 26.2L43.2 27.5L44.9 27.0L45.9 28.0L46.9 27.4L47.9 27.5L48.9 28.0L49.6 28z"/><rect x="29.5" y="19" width="1" height="9"/><rect x="8" y="26" width="1.5" height="2"/></svg></div>
<div class="clip" style="left:118.3px;width:17.7px;border-radius:3.500px"><div class="ct" style="left:4.5px;width:9.7px">The Laziest Productivity System To Crush Your Goals In 2025.mp4</div><div class="ths"><div class="th1" style="width:15px;background:#f4f8fc"><div style="position:absolute;left:2px;top:1px;width:6px;height:6px;border-radius:1.500px;background:#2f7fe0"></div><div style="position:absolute;left:1.500px;top:9px;width:7px;height:6px;background:linear-gradient(90deg,#e04a3a 0 30%,#f0c030 30% 50%,#e04a3a 50% 70%,#3a7fe0 70%)"></div><div style="position:absolute;left:2px;top:17px;width:6px;height:6px;border-radius:1.500px;background:#3a9fe8"></div></div></div><div class="ln"></div><div class="ab"></div><svg style="position:absolute;left:0;bottom:0" width="17.7" height="28" viewBox="0 0 17.7 28" fill="#3c49b4"><path d="M0 28L1.0 25.8L2.0 26.7L3.3 28.0L4.3 26.2L5.6 25.8L6.9 27.4L7.7 28.0L9.4 26.2L11.1 26.2L11.9 28.0L13.6 28.0L14.6 28.0L15.6 28.0L16.6 28.0L17.7 28z"/><rect x="4.5" y="18" width="1" height="10"/></svg></div>
<div class="clip" style="left:137.3px;width:48.7px;border-radius:3.500px"><div class="ct" style="left:4.5px;width:40.7px">The Laziest Productivity System To Crush Your Goals In 2025.mp4</div><div class="ths"><div class="th1" style="width:46px;background:#e9eaee"><div style="position:absolute;left:3px;top:2px;right:9px;bottom:2px;background:#fbfbfd"></div><div style="position:absolute;right:0;top:0;width:9px;bottom:0;background:#d5d6da"></div><div style="position:absolute;left:6px;top:6px;width:14px;height:1px;background:#b0b4c8"></div><div style="position:absolute;left:6px;top:9px;width:10px;height:1px;background:#c8cbd8"></div><div style="position:absolute;left:6px;top:12px;width:12px;height:1px;background:#c8cbd8"></div><div style="position:absolute;left:45%;bottom:1.500px;width:4px;height:1.500px;background:#3b5be0"></div></div><div class="bd" style="left:33.5px">#1</div></div><div class="ln"></div><div class="ab"></div><svg style="position:absolute;left:0;bottom:0" width="48.7" height="28" viewBox="0 0 48.7 28" fill="#3c49b4"><path d="M0 28L1.0 25.8L1.8 28.0L2.6 25.8L3.6 27.0L4.4 27.2L5.2 28.0L6.2 25.8L7.9 27.4L9.2 27.2L10.5 28.0L11.3 28.0L13.0 28.0L14.7 28.0L16.0 28.0L17.0 28.0L18.3 26.7L20.0 27.4L20.8 27.0L22.1 27.4L22.9 27.0L24.2 27.5L25.0 26.7L26.3 27.4L27.6 27.0L28.9 27.5L29.9 25.8L30.9 27.0L32.6 27.0L33.6 27.0L35.3 27.2L36.1 28.0L37.4 28.0L38.7 27.0L40.0 28.0L41.3 27.2L42.1 27.0L42.9 27.0L44.6 27.0L45.9 27.0L47.6 25.8L48.4 28.0L48.7 28z"/></svg></div>
<div class="clip" style="left:187.7px;width:72.3px;border-radius:3.500px"><div class="ct" style="left:4.5px;width:64.3px">The Laziest Productivity System To Crush Your Goals In 2025.mp4</div><div class="ths"><div class="th1" style="width:48px;background:#f2f2f5"><div style="position:absolute;left:0;top:0;width:4px;bottom:0;background:#202228"></div><div style="position:absolute;left:6px;top:4px;width:9px;height:8px;background:#3f5fe0"></div><div style="position:absolute;left:6px;top:13px;width:9px;height:8px;background:#e4e6f0"></div><div style="position:absolute;left:18px;top:5px;width:22px;height:1px;background:#b8bcd0"></div><div style="position:absolute;left:18px;top:10px;width:24px;height:3px;background:#e4e4ec"></div><div style="position:absolute;left:18px;top:16px;width:18px;height:1px;background:#c8cbd8"></div></div><div class="th1" style="width:22px"><div style="position:absolute;left:-8px;top:0;width:42.700px;height:24px;background:linear-gradient(90deg,#e6e4e0,#d9d6d0)"><div style="position:absolute;left:9.5px;top:16.500px;width:21px;height:12px;border-radius:9px 9px 0 0;background:#1e1d20"></div><div style="position:absolute;left:16.3px;top:5px;width:7.4px;height:10px;border-radius:3.7px;background:#b8937c"></div><div style="position:absolute;left:16.1px;top:4.2px;width:7.800000000000001px;height:3.800px;border-radius:3.500px 3.500px 1px 1px;background:#3a2f2a"></div><div style="position:absolute;left:18px;top:12.5px;width:4px;height:3px;border-radius:1.500px;background:#9a7a68"></div><div style="position:absolute;left:16.8px;top:20.500px;width:3.400px;height:3.500px;border-radius:1.200px;background:#d4d8e0"></div></div></div><div class="bd" style="left:33px">#1</div></div><div class="ln"></div><div class="ab"></div><svg style="position:absolute;left:0;bottom:0" width="72.3" height="28" viewBox="0 0 72.3 28" fill="#3c49b4"><path d="M0 28L1.0 27.5L1.8 27.5L2.6 26.2L3.6 28.0L4.6 26.2L5.9 28.0L7.6 28.0L9.3 28.0L10.3 27.4L11.3 28.0L12.3 25.8L14.0 27.5L15.0 25.8L16.7 27.5L18.0 27.4L19.0 28.0L19.8 27.5L20.6 27.0L21.6 26.2L22.6 27.0L23.4 26.7L24.4 26.7L25.4 25.8L26.7 26.7L28.4 27.4L29.2 27.2L30.9 27.5L32.6 27.0L33.6 27.0L34.6 27.0L35.4 28.0L36.4 25.8L37.2 27.4L38.2 27.4L39.9 25.8L40.7 27.0L41.5 27.2L43.2 28.0L44.0 27.0L45.0 26.7L45.8 28.0L47.5 27.0L48.3 28.0L50.0 27.2L51.0 26.7L52.7 27.0L54.4 27.0L55.4 27.0L56.7 27.0L57.7 28.0L58.7 26.2L59.5 26.2L61.2 27.2L62.0 27.5L63.0 26.2L63.8 27.0L65.1 28.0L66.1 27.5L67.4 27.4L68.7 27.4L70.4 27.0L71.2 26.2L72.3 28z"/><rect x="24" y="25.5" width="1" height="2.5"/></svg></div>
<div class="clip" style="left:261.3px;width:47.4px;border-radius:3.500px"><div class="ct" style="left:4.5px;width:39.4px">The Laziest Productivity System To Crush Your Goals In 2025.mp4</div><div class="ths"><div class="th1" style="width:45px"><div style="position:absolute;left:0px;top:0;width:42.700px;height:24px;background:linear-gradient(90deg,#f0f0ee 0 27%,#d3d0c9 31% 78%,#b4dcee 82% 86%,#eff1f3 89% 100%)"><div style="position:absolute;left:6.699999999999999px;top:16.500px;width:24px;height:12px;border-radius:9px 9px 0 0;background:#1e1d20"></div><div style="position:absolute;left:14.5px;top:3.5px;width:8.4px;height:11.5px;border-radius:4.2px;background:#b8937c"></div><div style="position:absolute;left:14.3px;top:2.7px;width:8.8px;height:3.800px;border-radius:3.500px 3.500px 1px 1px;background:#3a2f2a"></div><div style="position:absolute;left:16.7px;top:12.5px;width:4px;height:3px;border-radius:1.500px;background:#9a7a68"></div><div style="position:absolute;left:15.5px;top:20.500px;width:3.400px;height:3.500px;border-radius:1.200px;background:#d4d8e0"></div></div></div><div class="bd" style="left:33.5px">#1</div></div><div class="ln"></div><div class="ab"></div><svg style="position:absolute;left:0;bottom:0" width="47.4" height="28" viewBox="0 0 47.4 28" fill="#3c49b4"><path d="M0 28L1.0 27.4L2.0 27.4L3.7 27.0L5.4 27.2L7.1 27.0L8.4 27.2L9.2 27.2L10.0 27.2L11.7 28.0L12.5 26.2L13.8 27.0L15.1 27.0L15.9 28.0L16.9 28.0L17.7 26.7L19.0 28.0L20.0 26.7L21.0 26.2L22.3 26.2L23.3 27.0L25.0 27.2L25.8 26.7L26.6 27.4L28.3 28.0L29.6 28.0L30.4 26.7L31.2 25.8L32.2 28.0L33.5 28.0L35.2 28.0L36.5 27.0L38.2 26.7L39.2 28.0L40.2 28.0L41.2 26.7L42.0 27.4L43.0 26.7L44.3 27.0L45.3 26.7L47.0 27.0L47.4 28z"/><rect x="26" y="26" width="1.5" height="2"/></svg></div>
<div class="clip" style="left:310.3px;width:67.0px;border-radius:3.500px"><div class="ct" style="left:4.5px;width:59.0px">The Laziest Productivity System To Crush Your Goals In 2025.mp4</div><div class="ths"><div class="th1" style="width:40px;background:#17181c"><div style="position:absolute;left:2px;top:6px;right:3px;height:7px;background:#2b2e36"></div><div style="position:absolute;left:5px;top:9px;width:2px;height:2px;background:#777"></div></div><div class="th1" style="width:24px;background:#f2f2f5"><div style="position:absolute;left:0;top:0;width:4px;bottom:0;background:#202228"></div><div style="position:absolute;left:6px;top:4px;width:9px;height:8px;background:#3f5fe0"></div><div style="position:absolute;left:6px;top:13px;width:9px;height:8px;background:#e4e6f0"></div><div style="position:absolute;left:18px;top:5px;width:22px;height:1px;background:#b8bcd0"></div><div style="position:absolute;left:18px;top:10px;width:24px;height:3px;background:#e4e4ec"></div><div style="position:absolute;left:18px;top:16px;width:18px;height:1px;background:#c8cbd8"></div></div><div class="bd" style="left:33.5px">#1</div></div><div class="ln"></div><div class="ab"></div><svg style="position:absolute;left:0;bottom:0" width="67.0" height="28" viewBox="0 0 67.0 28" fill="#3c49b4"><path d="M0 28L1.0 26.7L2.3 28.0L3.6 28.0L4.4 28.0L5.4 27.0L7.1 27.0L8.8 28.0L10.5 27.5L12.2 27.0L13.9 27.0L15.2 27.0L16.2 27.2L17.2 27.5L18.2 26.2L19.5 28.0L20.5 28.0L21.3 27.5L22.6 26.2L23.6 28.0L24.4 27.5L26.1 27.0L27.4 25.8L28.4 26.7L29.2 28.0L30.2 27.4L31.5 28.0L32.3 26.7L33.6 27.2L34.9 27.0L35.7 26.7L36.7 27.2L37.7 28.0L39.0 26.2L39.8 28.0L41.1 27.0L42.1 27.0L42.9 28.0L44.2 28.0L45.2 26.2L46.0 26.2L46.8 26.7L48.1 27.5L49.1 28.0L50.1 27.5L51.8 27.2L53.5 27.4L54.8 25.8L55.8 28.0L57.5 27.0L58.5 27.0L59.3 27.5L60.3 28.0L61.1 28.0L62.1 27.5L63.4 28.0L65.1 28.0L65.9 27.5L66.7 27.5L67.0 28z"/><rect x="58" y="25" width="2" height="3"/></svg></div>
<div class="clip" style="left:379.3px;width:54.0px;border-radius:3.500px"><div class="ct" style="left:4.5px;width:46.0px">The Laziest Productivity System To Crush Your Goals In 2025.mp4</div><div class="ths"><div class="th1" style="width:51px;background:#f4f5f7"><div style="position:absolute;left:9px;top:7px;width:23px;height:12px;background:#fff;border:1px solid #9aa6e8;border-top:2px solid #7f8de0"></div><div style="position:absolute;right:0;top:0;width:10px;bottom:0;background:#dcdcd8"></div></div><div class="bd" style="left:33px">#1</div></div><div class="ln"></div><div class="ab"></div><svg style="position:absolute;left:0;bottom:0" width="54.0" height="28" viewBox="0 0 54.0 28" fill="#3c49b4"><path d="M0 28L1.0 28.0L2.3 28.0L4.0 28.0L4.8 27.5L5.6 28.0L6.9 28.0L8.2 27.0L9.2 27.0L10.9 28.0L12.6 28.0L14.3 27.5L15.6 28.0L16.6 28.0L17.6 27.2L18.9 27.5L20.2 25.8L21.2 28.0L22.9 28.0L24.6 26.7L25.4 27.0L27.1 26.7L28.4 28.0L30.1 28.0L30.9 27.0L31.9 26.7L32.7 28.0L33.5 26.7L35.2 28.0L36.9 26.7L38.6 27.0L39.6 28.0L40.4 27.4L41.7 27.2L42.7 25.8L44.0 28.0L45.3 27.0L47.0 28.0L48.7 28.0L49.7 28.0L51.4 27.5L53.1 26.2L54.0 28z"/></svg></div>
<div class="clip" style="left:435.3px;width:55.4px;border-radius:3.500px"><div class="ct" style="left:4.5px;width:47.4px">The Laziest Productivity System To Crush Your Goals In 2025.mp4</div><div class="ths"><div class="th1" style="width:42.7px"><div style="position:absolute;left:0px;top:0;width:42.700px;height:24px;background:linear-gradient(90deg,#f0f0ee 0 27%,#d3d0c9 31% 78%,#b4dcee 82% 86%,#eff1f3 89% 100%)"><div style="position:absolute;left:7.5px;top:16.500px;width:21px;height:12px;border-radius:9px 9px 0 0;background:#1e1d20"></div><div style="position:absolute;left:14.3px;top:5px;width:7.4px;height:10px;border-radius:3.7px;background:#b8937c"></div><div style="position:absolute;left:14.100000000000001px;top:4.2px;width:7.800000000000001px;height:3.800px;border-radius:3.500px 3.500px 1px 1px;background:#3a2f2a"></div><div style="position:absolute;left:16px;top:12.5px;width:4px;height:3px;border-radius:1.500px;background:#9a7a68"></div><div style="position:absolute;left:14.8px;top:20.500px;width:3.400px;height:3.500px;border-radius:1.200px;background:#d4d8e0"></div></div></div><div class="th1" style="width:10.3px"><div style="position:absolute;left:0px;top:0;width:42.700px;height:24px;background:linear-gradient(90deg,#f0f0ee 0 27%,#d3d0c9 31% 78%,#b4dcee 82% 86%,#eff1f3 89% 100%)"><div style="position:absolute;left:7.5px;top:16.500px;width:21px;height:12px;border-radius:9px 9px 0 0;background:#1e1d20"></div><div style="position:absolute;left:14.3px;top:5px;width:7.4px;height:10px;border-radius:3.7px;background:#b8937c"></div><div style="position:absolute;left:14.100000000000001px;top:4.2px;width:7.800000000000001px;height:3.800px;border-radius:3.500px 3.500px 1px 1px;background:#3a2f2a"></div><div style="position:absolute;left:16px;top:12.5px;width:4px;height:3px;border-radius:1.500px;background:#9a7a68"></div><div style="position:absolute;left:14.8px;top:20.500px;width:3.400px;height:3.500px;border-radius:1.200px;background:#d4d8e0"></div></div></div><div class="bd" style="left:33.5px">#1</div></div><div class="ln"></div><div class="ab"></div><svg style="position:absolute;left:0;bottom:0" width="55.4" height="28" viewBox="0 0 55.4 28" fill="#3c49b4"><path d="M0 28L1.0 27.4L2.7 27.2L4.4 27.2L5.2 27.2L6.0 27.2L7.3 26.2L8.1 27.0L8.9 26.7L10.2 27.2L11.0 26.2L12.7 25.8L13.5 27.2L15.2 26.7L16.0 26.7L16.8 28.0L18.1 27.5L19.1 27.0L20.4 26.2L21.7 27.0L23.0 26.2L23.8 27.5L25.5 27.0L26.5 28.0L27.3 26.2L29.0 25.8L30.0 27.5L31.3 28.0L32.1 27.0L33.1 27.4L34.8 26.2L36.1 26.7L37.4 26.7L38.7 26.2L39.7 26.7L41.4 27.0L43.1 28.0L44.1 27.5L45.1 28.0L46.1 27.0L47.8 27.0L48.8 28.0L50.1 28.0L51.8 27.4L52.8 27.0L53.6 27.4L54.9 27.0L55.4 28z"/><rect x="9.5" y="20.5" width="2.5" height="7.5"/></svg></div>
<div class="clip" style="left:492.7px;width:54.0px;border-radius:3.500px"><div class="ct" style="left:4.5px;width:46.0px">The Laziest Productivity System To Crush Your Goals In 2025.mp4</div><div class="ths"><div class="th1" style="width:51px;background:#f3f3f6"><div style="position:absolute;left:1px;top:5px;width:15px;height:15px;border-radius:50%;border:1.500px solid #f0c020"></div><div style="position:absolute;left:22px;top:4px;width:18px;height:1px;background:#b8bcd0"></div><div style="position:absolute;left:22px;top:9px;width:20px;height:3px;background:#dcdde6"></div><div style="position:absolute;left:22px;top:15px;width:16px;height:1px;background:#c8cbd8"></div><div style="position:absolute;left:45px;top:2px;width:3px;height:14px;background:#4a55b0"></div></div><div class="bd" style="left:33.5px">#1</div></div><div class="ln"></div><div class="ab"></div><svg style="position:absolute;left:0;bottom:0" width="54.0" height="28" viewBox="0 0 54.0 28" fill="#3c49b4"><path d="M0 28L1.0 27.2L2.0 27.2L3.3 25.8L4.3 28.0L6.0 26.2L7.7 27.0L8.7 26.2L10.0 27.2L10.8 28.0L12.1 25.8L13.4 27.4L14.4 28.0L15.7 27.0L17.4 26.2L19.1 26.2L20.4 28.0L21.4 28.0L23.1 28.0L24.8 28.0L25.6 26.2L27.3 28.0L28.3 28.0L29.3 27.4L30.3 27.0L31.1 27.5L32.8 28.0L33.6 28.0L34.6 27.0L35.4 27.5L36.7 27.4L38.0 27.0L39.7 28.0L40.5 28.0L41.8 27.0L42.8 26.2L44.1 27.0L44.9 28.0L46.2 28.0L47.5 27.2L48.5 28.0L49.5 27.0L50.5 28.0L52.2 27.5L53.5 28.0L54.0 28z"/></svg></div>
<div class="clip" style="left:548.7px;width:40.3px;border-radius:3.500px"><div class="ct" style="left:4.5px;width:32.3px">The Laziest Productivity System To Crush Your Goals In 2025.mp4</div><div class="ths"><div class="th1" style="width:37px;background:#f6f6f9"><div style="position:absolute;left:0;top:0;width:5px;bottom:0;background:#e2e3ee"></div><div style="position:absolute;left:1.500px;top:6px;width:2px;height:8px;background:#4a58c0"></div><div style="position:absolute;left:8px;top:4px;width:18px;height:1px;background:#b8bcd0"></div><div style="position:absolute;left:8px;top:9px;width:14px;height:1px;background:#c8cbd8"></div><div style="position:absolute;left:8px;top:13px;width:16px;height:1px;background:#c8cbd8"></div><div style="position:absolute;left:55%;bottom:2px;width:4px;height:1.500px;background:#3b5be0"></div></div><div class="bd" style="left:30.5px">#1</div></div><div class="ln"></div><div class="ab"></div><svg style="position:absolute;left:0;bottom:0" width="40.3" height="28" viewBox="0 0 40.3 28" fill="#3c49b4"><path d="M0 28L1.0 27.0L2.7 27.5L4.4 28.0L5.7 27.0L7.4 27.2L8.4 28.0L9.2 27.2L10.9 27.2L12.6 27.0L13.4 26.7L14.2 27.0L15.9 27.0L17.2 27.0L18.2 28.0L19.2 26.7L20.5 28.0L22.2 25.8L23.2 27.0L24.9 26.2L25.7 25.8L26.7 26.2L27.5 27.0L28.3 25.8L29.3 26.2L30.1 28.0L31.1 26.2L32.8 27.2L33.6 28.0L34.6 27.2L35.6 27.4L37.3 28.0L38.6 27.5L40.3 28z"/></svg></div>
<div class="clip" style="left:591px;width:20.7px;border-radius:3.500px"><div class="ct" style="left:4.5px;width:12.7px">The Laziest Productivity System To Crush Your Goals In 2025.mp4</div><div class="ths"><div class="th1" style="width:18px;background:#f6f6f9"><div style="position:absolute;left:0;top:0;width:5px;bottom:0;background:#e2e3ee"></div><div style="position:absolute;left:1.500px;top:6px;width:2px;height:8px;background:#4a58c0"></div><div style="position:absolute;left:8px;top:4px;width:18px;height:1px;background:#b8bcd0"></div><div style="position:absolute;left:8px;top:9px;width:14px;height:1px;background:#c8cbd8"></div><div style="position:absolute;left:8px;top:13px;width:16px;height:1px;background:#c8cbd8"></div><div style="position:absolute;left:55%;bottom:2px;width:4px;height:1.500px;background:#3b5be0"></div></div></div><div class="ln"></div><div class="ab"></div><svg style="position:absolute;left:0;bottom:0" width="20.7" height="28" viewBox="0 0 20.7 28" fill="#3c49b4"><path d="M0 28L1.0 27.2L2.3 28.0L3.3 28.0L4.1 28.0L5.4 28.0L6.7 26.2L7.5 27.0L8.5 26.2L9.8 26.7L11.5 28.0L12.3 28.0L13.3 27.2L15.0 27.0L16.3 27.2L18.0 28.0L19.7 27.0L20.7 28z"/></svg></div>
<div class="clip" style="left:614px;width:14px;border-radius:3.500px"><div class="ct" style="left:4.5px;width:6.0px">The Laziest Productivity System To Crush Your Goals In 2025.mp4</div><div class="ths"><div class="th1" style="width:11px"><div style="position:absolute;left:0px;top:0;width:42.700px;height:24px;background:#efefed"><div style="position:absolute;left:2.5px;top:16.500px;width:21px;height:12px;border-radius:9px 9px 0 0;background:#1e1d20"></div><div style="position:absolute;left:9.3px;top:5px;width:7.4px;height:10px;border-radius:3.7px;background:#b8937c"></div><div style="position:absolute;left:9.100000000000001px;top:4.2px;width:7.800000000000001px;height:3.800px;border-radius:3.500px 3.500px 1px 1px;background:#3a2f2a"></div><div style="position:absolute;left:11px;top:12.5px;width:4px;height:3px;border-radius:1.500px;background:#9a7a68"></div><div style="position:absolute;left:9.8px;top:20.500px;width:3.400px;height:3.500px;border-radius:1.200px;background:#d4d8e0"></div></div></div></div><div class="ln"></div><div class="ab"></div><svg style="position:absolute;left:0;bottom:0" width="14" height="28" viewBox="0 0 14 28" fill="#3c49b4"><path d="M0 28L1.0 28.0L2.7 28.0L4.4 28.0L5.2 26.7L6.2 28.0L7.5 27.2L8.8 27.2L9.6 26.7L10.9 26.7L12.2 28.0L13.0 28.0L14 28z"/></svg></div>
<div class="clip" style="left:630px;width:18px;border-radius:3.500px"><div class="ct" style="left:4.5px;width:10.0px">The Laziest Productivity System To Crush Your Goals In 2025.mp4</div><div class="ths"><div class="th1" style="width:15px"><div style="position:absolute;left:0px;top:0;width:42.700px;height:24px;background:#efefed"><div style="position:absolute;left:6.5px;top:16.500px;width:21px;height:12px;border-radius:9px 9px 0 0;background:#1e1d20"></div><div style="position:absolute;left:13.3px;top:5px;width:7.4px;height:10px;border-radius:3.7px;background:#b8937c"></div><div style="position:absolute;left:13.100000000000001px;top:4.2px;width:7.800000000000001px;height:3.800px;border-radius:3.500px 3.500px 1px 1px;background:#3a2f2a"></div><div style="position:absolute;left:15px;top:12.5px;width:4px;height:3px;border-radius:1.500px;background:#9a7a68"></div><div style="position:absolute;left:13.8px;top:20.500px;width:3.400px;height:3.500px;border-radius:1.200px;background:#d4d8e0"></div></div></div></div><div class="ln"></div><div class="ab"></div><svg style="position:absolute;left:0;bottom:0" width="18" height="28" viewBox="0 0 18 28" fill="#3c49b4"><path d="M0 28L1.0 28.0L2.7 28.0L4.4 26.7L6.1 28.0L7.1 28.0L8.1 28.0L9.4 27.4L10.4 27.2L11.7 28.0L13.0 25.8L13.8 27.0L14.8 26.2L15.8 27.0L17.5 28.0L18 28z"/></svg></div>
<div class="clip" style="left:650px;width:311px;border-radius:3.500px 0 0 3.500px"><div class="ct" style="left:4.5px;width:303.0px">The Laziest Productivity System To Crush Your Goals In 2025.mp4</div><div class="ths" style="right:0;border-radius:2px 0 0 2px"><div class="th1" style="width:42px"><div style="position:absolute;left:0px;top:0;width:42.700px;height:24px;background:linear-gradient(90deg,#f0f0ee 0 27%,#d3d0c9 31% 78%,#b4dcee 82% 86%,#eff1f3 89% 100%)"><div style="position:absolute;left:9.5px;top:16.500px;width:21px;height:12px;border-radius:9px 9px 0 0;background:#1e1d20"></div><div style="position:absolute;left:16.3px;top:5px;width:7.4px;height:10px;border-radius:3.7px;background:#b8937c"></div><div style="position:absolute;left:16.1px;top:4.2px;width:7.800000000000001px;height:3.800px;border-radius:3.500px 3.500px 1px 1px;background:#3a2f2a"></div><div style="position:absolute;left:18px;top:12.5px;width:4px;height:3px;border-radius:1.500px;background:#9a7a68"></div><div style="position:absolute;left:16.8px;top:20.500px;width:3.400px;height:3.500px;border-radius:1.200px;background:#d4d8e0"></div></div></div><div class="th1" style="width:42px;background:#f2f2f5"><div style="position:absolute;left:0;top:0;width:4px;bottom:0;background:#202228"></div><div style="position:absolute;left:6px;top:4px;width:9px;height:8px;background:#3f5fe0"></div><div style="position:absolute;left:6px;top:13px;width:9px;height:8px;background:#e4e6f0"></div><div style="position:absolute;left:18px;top:5px;width:22px;height:1px;background:#b8bcd0"></div><div style="position:absolute;left:18px;top:10px;width:24px;height:3px;background:#e4e4ec"></div><div style="position:absolute;left:18px;top:16px;width:18px;height:1px;background:#c8cbd8"></div></div><div class="th1" style="width:42px;background:#dedee0"><div style="position:absolute;left:0;top:0;width:7px;bottom:0;background:#c8c8c8"></div><div style="position:absolute;left:1.500px;top:6px;width:4px;height:8px;background:#8a8a8a"></div><div style="position:absolute;left:28px;top:2px;width:14px;height:17px;background:#f2f2f4"></div><div style="position:absolute;left:9px;top:13px;width:17px;height:13px;border-radius:7px 7px 0 0;background:#7a6a4a"></div><div style="position:absolute;left:10px;top:-2px;width:17px;height:15px;border-radius:8px;background:#17120e"></div><div style="position:absolute;left:20px;top:6px;width:5px;height:7px;border-radius:2.500px;background:#7a5238"></div></div><div class="th1" style="width:42px"><div style="position:absolute;left:0px;top:0;width:42.700px;height:24px;background:linear-gradient(90deg,#e6e4e0 0%,#d4d1ca 60%,#e4e2de 100%)"><div style="position:absolute;left:9.5px;top:16.500px;width:21px;height:12px;border-radius:9px 9px 0 0;background:#1e1d20"></div><div style="position:absolute;left:16.3px;top:5px;width:7.4px;height:10px;border-radius:3.7px;background:#b8937c"></div><div style="position:absolute;left:16.1px;top:4.2px;width:7.800000000000001px;height:3.800px;border-radius:3.500px 3.500px 1px 1px;background:#3a2f2a"></div><div style="position:absolute;left:18px;top:12.5px;width:4px;height:3px;border-radius:1.500px;background:#9a7a68"></div><div style="position:absolute;left:16.8px;top:20.500px;width:3.400px;height:3.500px;border-radius:1.200px;background:#d4d8e0"></div></div></div><div class="th1" style="width:42px;background:#f5f5f8"><div style="position:absolute;left:3px;top:3px;width:8px;height:2px;background:#f0b0a8"></div><div style="position:absolute;left:3px;top:7px;width:9px;height:6px;background:#a8b4f0"></div><div style="position:absolute;left:3px;top:15px;width:8px;height:4px;background:#b8c0f4"></div><div style="position:absolute;left:15px;top:4px;width:9px;height:3px;background:#c8ccf8"></div><div style="position:absolute;left:15px;top:9px;width:9px;height:4px;background:#f4d0a0"></div><div style="position:absolute;left:15px;top:15px;width:9px;height:5px;background:#f4dcb8"></div><div style="position:absolute;left:28px;top:3px;width:10px;height:3px;background:#8aa0f0"></div><div style="position:absolute;left:28px;top:8px;width:10px;height:8px;background:#e8eaf4"></div><div style="position:absolute;left:28px;top:18px;width:8px;height:2px;background:#b0b8e8"></div></div><div class="th1" style="width:42px"><div style="position:absolute;left:0px;top:0;width:42.700px;height:24px;background:linear-gradient(90deg,#e6e4e0 0%,#d6d3cd 60%,#e6e4e0 100%)"><div style="position:absolute;left:9.5px;top:16.500px;width:21px;height:12px;border-radius:9px 9px 0 0;background:#1e1d20"></div><div style="position:absolute;left:16.3px;top:5px;width:7.4px;height:10px;border-radius:3.7px;background:#b8937c"></div><div style="position:absolute;left:16.1px;top:4.2px;width:7.800000000000001px;height:3.800px;border-radius:3.500px 3.500px 1px 1px;background:#3a2f2a"></div><div style="position:absolute;left:18px;top:12.5px;width:4px;height:3px;border-radius:1.500px;background:#9a7a68"></div><div style="position:absolute;left:16.8px;top:20.500px;width:3.400px;height:3.500px;border-radius:1.200px;background:#d4d8e0"></div></div></div><div class="th1" style="width:2.500px;background:#0a0a12"></div><div class="th1" style="width:56px;background:#f6f7fa"><div style="position:absolute;left:7px;top:8px;width:2.5px;height:5px;background:#e0605a"></div><div style="position:absolute;left:12px;top:6px;width:3px;height:9px;background:#5068c8"></div><div style="position:absolute;left:16.5px;top:6px;width:3px;height:15px;background:#5068c8"></div><div style="position:absolute;left:21px;top:6px;width:3px;height:15px;background:#5068c8"></div><div style="position:absolute;left:25.5px;top:6px;width:3px;height:9px;background:#e89060"></div><div style="position:absolute;left:25.5px;top:15px;width:3px;height:6px;background:#5068c8"></div><div style="position:absolute;left:12px;top:16px;width:3px;height:5px;background:#5068c8"></div><div style="position:absolute;left:36px;top:5px;width:14px;height:1px;background:#b8bcd0"></div><div style="position:absolute;left:36px;top:9px;width:12px;height:1px;background:#c8cbd8"></div><div style="position:absolute;left:36px;top:13px;width:14px;height:1px;background:#c8cbd8"></div><div style="position:absolute;left:44px;top:20px;width:5px;height:1.5px;background:#3b5be0"></div></div><div class="bd" style="left:32.5px">#1</div><div class="bd" style="left:75px">#1</div><div class="bd" style="left:117px">#1</div><div class="bd" style="left:159px">#1</div><div class="bd" style="left:201px">#1</div><div class="bd" style="left:243px">#1</div><div class="bd" style="left:289px">#1</div></div><div class="ln"></div><div class="ab" style="border-right:0;border-radius:0 0 0 3.500px"></div><svg style="position:absolute;left:0;bottom:0" width="311" height="28" viewBox="0 0 311 28" fill="#3c49b4"><path d="M0 28L1.0 28.0L2.3 27.4L4.0 28.0L4.8 26.7L5.6 27.0L6.4 26.2L8.1 28.0L9.1 27.0L10.1 26.2L11.8 25.8L12.8 27.0L13.6 26.7L14.9 26.7L16.2 27.2L17.5 26.7L18.5 28.0L19.5 27.4L20.5 27.0L21.5 26.7L22.5 27.2L23.3 26.2L24.6 27.0L25.6 27.5L26.4 27.5L28.1 28.0L28.9 28.0L30.6 27.0L32.3 27.2L33.1 26.7L34.1 28.0L34.9 27.0L35.9 28.0L37.2 27.0L38.2 28.0L39.5 27.5L40.3 28.0L41.6 27.0L42.4 27.2L43.7 27.4L44.5 27.0L45.8 28.0L46.8 28.0L48.1 26.2L49.4 27.4L50.7 28.0L51.7 28.0L53.4 27.0L55.1 28.0L56.8 28.0L58.5 27.5L59.5 27.5L60.3 27.5L61.3 26.2L62.6 26.2L63.9 27.5L65.2 26.2L66.0 26.7L67.3 26.2L69.0 28.0L70.3 27.5L71.3 26.2L73.0 27.0L73.8 26.2L74.8 26.2L75.6 28.0L77.3 25.8L78.6 28.0L79.6 27.4L80.4 28.0L81.4 27.5L83.1 28.0L84.4 27.0L85.4 27.4L86.7 26.7L87.7 27.0L88.7 28.0L89.5 26.2L91.2 27.0L92.5 27.4L93.3 28.0L94.6 28.0L96.3 28.0L97.3 27.5L98.3 25.8L100.0 25.8L101.0 28.0L102.0 25.8L103.0 28.0L104.7 27.0L105.7 26.2L107.0 28.0L108.0 27.0L109.0 28.0L109.8 27.5L111.1 28.0L112.8 25.8L114.5 27.0L115.8 27.5L117.5 26.7L118.5 26.2L120.2 27.5L121.5 28.0L123.2 27.4L124.0 28.0L125.7 28.0L126.7 28.0L128.4 27.4L130.1 26.2L130.9 28.0L131.9 27.2L133.6 27.2L134.4 28.0L135.2 28.0L136.2 28.0L137.5 27.0L138.3 28.0L140.0 27.5L141.0 28.0L141.8 25.8L142.6 27.0L143.6 28.0L144.9 27.4L145.9 28.0L147.2 25.8L148.5 27.4L149.8 25.8L151.1 28.0L152.1 26.7L153.8 27.0L155.1 25.8L156.1 27.2L157.4 28.0L158.4 27.4L160.1 27.4L161.4 27.5L162.7 26.2L163.7 26.7L164.5 27.0L165.3 27.5L166.6 28.0L167.4 26.7L169.1 27.2L170.4 26.2L171.7 25.8L172.7 27.2L174.0 28.0L175.7 27.0L176.7 25.8L177.5 26.7L178.8 26.7L180.1 28.0L180.9 27.0L181.9 26.7L183.6 26.2L184.9 28.0L185.9 28.0L186.9 25.8L187.7 28.0L188.5 28.0L189.8 26.7L190.6 27.0L191.9 27.0L192.9 26.2L194.2 25.8L195.2 27.0L196.5 25.8L198.2 27.4L199.2 28.0L200.2 27.4L201.9 28.0L202.7 27.5L203.7 27.5L205.0 26.2L206.3 28.0L207.1 27.5L208.4 25.8L210.1 25.8L211.8 27.0L212.8 28.0L213.6 28.0L214.4 26.2L215.4 27.0L216.4 28.0L217.2 28.0L218.2 27.4L219.9 27.0L221.6 25.8L222.6 27.0L223.9 28.0L225.2 27.5L226.0 28.0L226.8 26.2L228.5 28.0L229.3 27.5L231.0 27.4L232.0 28.0L233.3 27.0L234.1 28.0L235.4 26.7L236.2 26.7L237.9 27.5L239.2 26.7L240.2 28.0L241.0 27.4L242.3 27.0L243.3 27.4L244.6 27.0L246.3 27.2L247.3 26.2L249.0 28.0L249.8 28.0L251.5 27.0L252.8 27.0L254.5 25.8L255.3 25.8L256.3 27.4L257.1 28.0L257.9 28.0L258.9 27.2L259.9 28.0L260.7 28.0L261.7 27.5L262.5 28.0L263.3 28.0L264.6 27.0L265.4 26.2L266.2 27.0L267.2 27.0L268.0 28.0L268.8 27.5L269.6 27.5L270.9 28.0L271.7 27.4L272.5 27.5L273.5 26.7L274.8 27.2L276.5 26.7L277.3 27.2L278.6 26.7L279.4 27.2L280.7 25.8L282.4 26.7L283.2 26.2L284.0 26.2L284.8 27.2L286.5 28.0L287.5 28.0L288.8 27.4L290.5 28.0L291.5 26.7L292.3 28.0L293.6 28.0L294.4 28.0L295.4 28.0L296.7 27.0L298.0 25.8L299.0 26.7L300.0 27.0L301.7 27.4L302.5 27.5L303.3 28.0L304.1 27.5L305.4 27.2L306.2 26.2L307.9 28.0L309.6 27.5L310.4 27.2L311 28z"/><rect x="58.5" y="21" width="1.2" height="7"/><rect x="78" y="25.5" width="3" height="2.5"/><rect x="162" y="25" width="2" height="3"/></svg></div>
<!-- /CLIPS -->
<svg class="abs" style="left:8px;top:356px" width="20" height="127" viewBox="8 356 20 127" fill="none" stroke="#d0d0d0" stroke-width="1.200" stroke-linecap="round" stroke-linejoin="round">
<path d="M13 363.300q5-5.500 10 0q-5 5.500-10 0z"/><circle cx="18" cy="363.300" r="1.500"/>
<path d="M16.300 377.500h-.8q-2.300 0-2.300 3t2.300 3h.8M19.700 377.500h.8q2.300 0 2.300 3t-2.300 3h-.8M16.500 380.500h3"/>
<g stroke="#dfe3f5">
<path d="M13 415q5-5.500 10 0q-5 5.500-10 0z"/><circle cx="18" cy="415" r="1.500"/>
<path d="M13.300 431.200h1.700l2.800-2.400v7.500l-2.800-2.400h-1.700z"/><path d="M19.800 430.500q1.300 2 0 4M21.700 429q2.300 3.500 0 7" stroke-width="1.100"/>
<path d="M14.500 446.800h.8M17.600 446.800h.8M20.700 446.800h.8M14.500 454.800h.8M17.600 454.800h.8M20.700 454.800h.8" stroke-width="1" stroke="#b4b8d4"/><path d="M13.800 449.300h8.400v3h-8.400z" fill="#c4c8e0" stroke="none"/><path d="M16.500 449.300v3M19.500 449.300v3" stroke="#343b5e" stroke-width=".7"/>
</g>
<path d="M15 482.500h6" stroke="#bcd" stroke-width="1"/>
</svg>
<div class="abs" style="left:145px;top:484px;width:327px;height:5px;border-radius:2.500px;background:#7a7a7a"></div>
<div class="abs" style="left:962px;top:364px;width:4.500px;height:92px;border-radius:2.500px;background:#8a8a8a"></div>
<div class="t" style="left:9px;top:496.300px;font-size:10px;color:#b0b0b0">Project length: 07:08</div>
<div class="ml" style="top:366.5px">0</div>
<div class="abs" style="left:988.500px;top:370.0px;width:1.500px;height:1px;background:#666"></div>
<div class="ml" style="top:378.5px">-5</div>
<div class="abs" style="left:988.500px;top:382.0px;width:1.500px;height:1px;background:#666"></div>
<div class="ml" style="top:391.0px">-10</div>
<div class="abs" style="left:988.500px;top:394.5px;width:1.500px;height:1px;background:#666"></div>
<div class="ml" style="top:403.5px">-15</div>
<div class="abs" style="left:988.500px;top:407.0px;width:1.500px;height:1px;background:#666"></div>
<div class="ml" style="top:416.0px">-20</div>
<div class="abs" style="left:988.500px;top:419.5px;width:1.500px;height:1px;background:#666"></div>
<div class="ml" style="top:430.5px">-30</div>
<div class="abs" style="left:988.500px;top:434.0px;width:1.500px;height:1px;background:#666"></div>
<div class="ml" style="top:444.5px">-40</div>
<div class="abs" style="left:988.500px;top:448.0px;width:1.500px;height:1px;background:#666"></div>
<div class="ml" style="top:459.0px">-50</div>
<div class="abs" style="left:988.500px;top:462.5px;width:1.500px;height:1px;background:#666"></div>
<div class="ml" style="top:467.0px">-60</div>
<div class="abs" style="left:988.500px;top:470.5px;width:1.500px;height:1px;background:#666"></div>
<svg class="abs" style="left:990px;top:358px" width="26" height="116" viewBox="990 358 26 116" fill="#2d2d2d"><rect x="993" y="360.50" width="7" height="2.400"/><rect x="1005.500" y="360.50" width="7" height="2.400"/><rect x="993" y="364.77" width="7" height="2.400"/><rect x="1005.500" y="364.77" width="7" height="2.400"/><rect x="993" y="369.04" width="7" height="2.400"/><rect x="1005.500" y="369.04" width="7" height="2.400"/><rect x="993" y="373.31" width="7" height="2.400"/><rect x="1005.500" y="373.31" width="7" height="2.400"/><rect x="993" y="377.58" width="7" height="2.400"/><rect x="1005.500" y="377.58" width="7" height="2.400"/><rect x="993" y="381.85" width="7" height="2.400"/><rect x="1005.500" y="381.85" width="7" height="2.400"/><rect x="993" y="386.12" width="7" height="2.400"/><rect x="1005.500" y="386.12" width="7" height="2.400"/><rect x="993" y="390.39" width="7" height="2.400"/><rect x="1005.500" y="390.39" width="7" height="2.400"/><rect x="993" y="394.66" width="7" height="2.400"/><rect x="1005.500" y="394.66" width="7" height="2.400"/><rect x="993" y="398.93" width="7" height="2.400"/><rect x="1005.500" y="398.93" width="7" height="2.400"/><rect x="993" y="403.20" width="7" height="2.400"/><rect x="1005.500" y="403.20" width="7" height="2.400"/><rect x="993" y="407.47" width="7" height="2.400"/><rect x="1005.500" y="407.47" width="7" height="2.400"/><rect x="993" y="411.74" width="7" height="2.400"/><rect x="1005.500" y="411.74" width="7" height="2.400"/><rect x="993" y="416.01" width="7" height="2.400"/><rect x="1005.500" y="416.01" width="7" height="2.400"/><rect x="993" y="420.28" width="7" height="2.400"/><rect x="1005.500" y="420.28" width="7" height="2.400"/><rect x="993" y="424.55" width="7" height="2.400"/><rect x="1005.500" y="424.55" width="7" height="2.400"/><rect x="993" y="428.82" width="7" height="2.400"/><rect x="1005.500" y="428.82" width="7" height="2.400"/><rect x="993" y="433.09" width="7" height="2.400"/><rect x="1005.500" y="433.09" width="7" height="2.400"/><rect x="993" y="437.36" width="7" height="2.400"/><rect x="1005.500" y="437.36" width="7" height="2.400"/><rect x="993" y="441.63" width="7" height="2.400"/><rect x="1005.500" y="441.63" width="7" height="2.400"/><rect x="993" y="445.90" width="7" height="2.400"/><rect x="1005.500" y="445.90" width="7" height="2.400"/><rect x="993" y="450.17" width="7" height="2.400"/><rect x="1005.500" y="450.17" width="7" height="2.400"/><rect x="993" y="454.44" width="7" height="2.400"/><rect x="1005.500" y="454.44" width="7" height="2.400"/><rect x="993" y="458.71" width="7" height="2.400"/><rect x="1005.500" y="458.71" width="7" height="2.400"/><rect x="993" y="462.98" width="7" height="2.400"/><rect x="1005.500" y="462.98" width="7" height="2.400"/><rect x="993" y="467.25" width="7" height="2.400"/><rect x="1005.500" y="467.25" width="7" height="2.400"/></svg>
<div class="t" style="left:994px;top:479px;font-size:8px;color:#555">L</div><div class="t" style="left:1006.500px;top:479px;font-size:8px;color:#555">R</div>
<div class="abs" style="left:994px;top:494px;width:17px;height:15px;background:#282828;border-radius:1.500px"></div><div class="abs" style="left:1002px;top:494px;width:1px;height:15px;background:#1e1e1e"></div><div class="abs" style="left:994px;top:501px;width:17px;height:1px;background:#1e1e1e"></div>
</div>
</body>
</html>
